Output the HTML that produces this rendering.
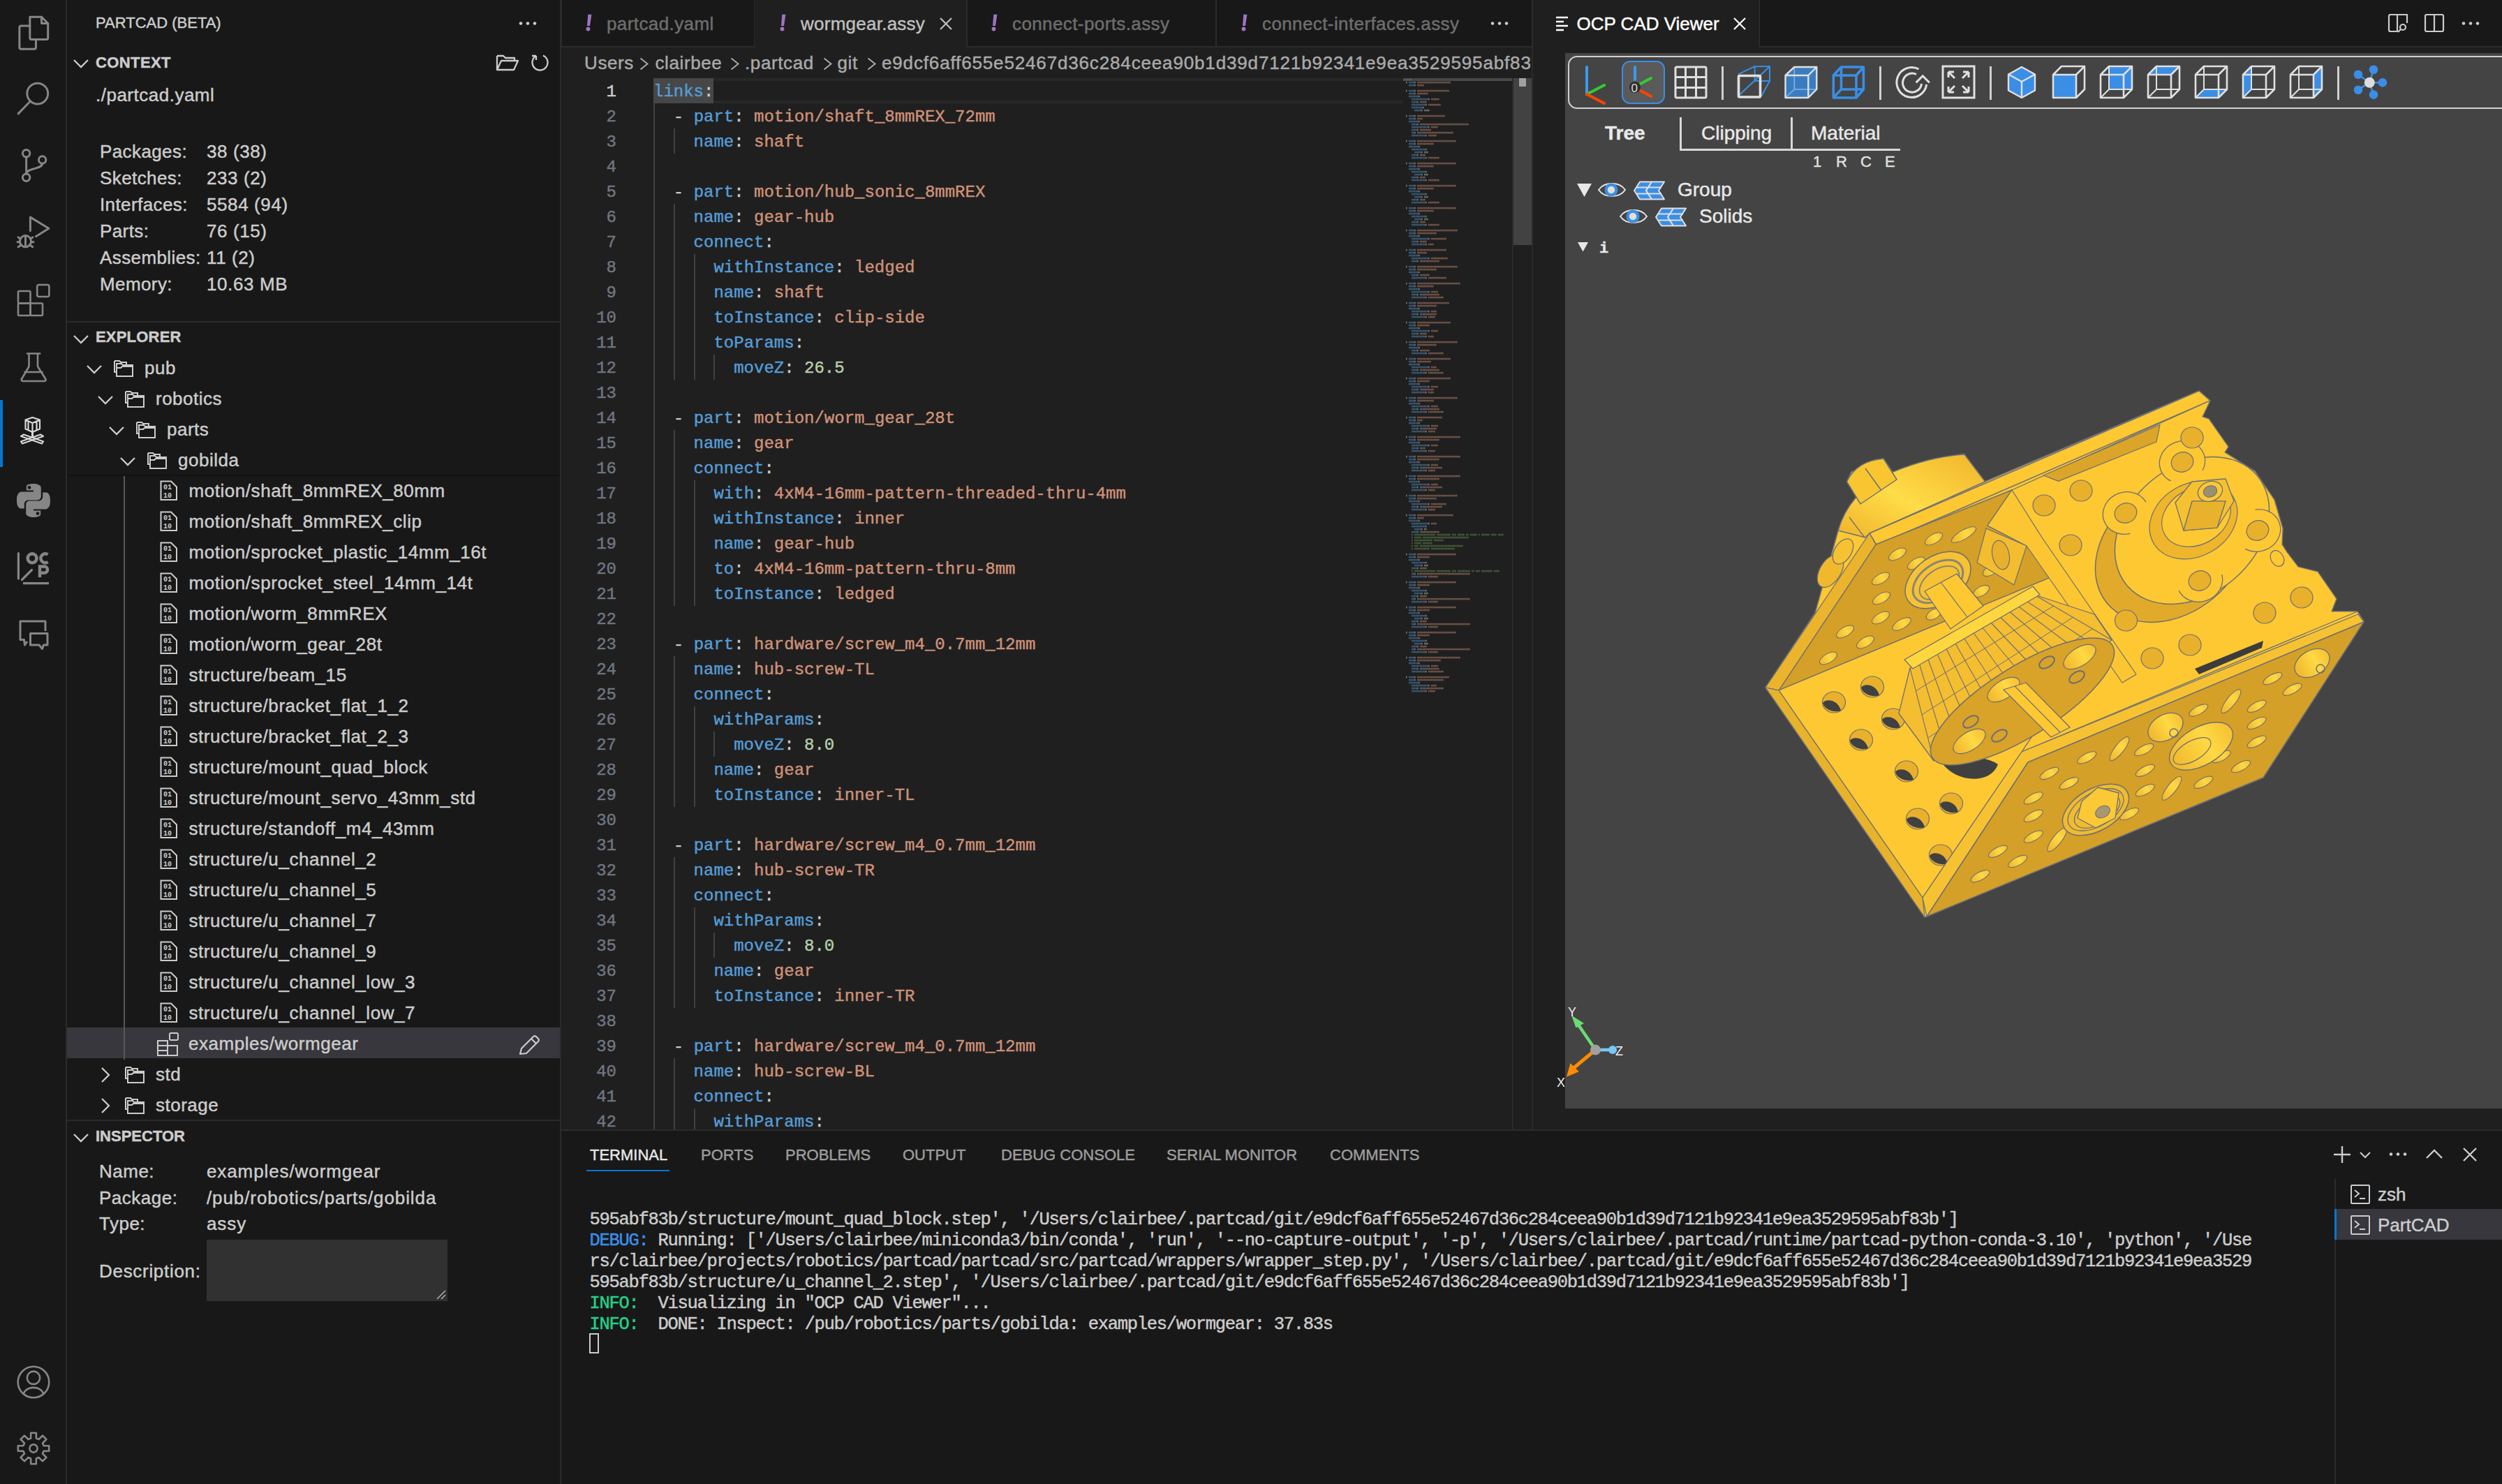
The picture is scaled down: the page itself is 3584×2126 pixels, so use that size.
<!DOCTYPE html>
<html><head><meta charset="utf-8"><style>
*{margin:0;padding:0;box-sizing:border-box}
html,body{width:3584px;height:2126px;overflow:hidden;background:#181818}
body{position:relative;font-family:"Liberation Sans",sans-serif;color:#cccccc}
.a{position:absolute;white-space:pre;line-height:0;-webkit-text-stroke-width:0.45px}
.r{position:absolute}
svg{position:absolute;overflow:visible}
</style></head><body>
<div class="r" style="left:0px;top:0px;width:94px;height:2126px;background:#181818;"></div>
<div class="r" style="left:94px;top:0px;width:2px;height:2126px;background:#2b2b2b;"></div>
<svg style="left:24px;top:21px;" width="48" height="48" viewBox="0 0 48 48"><g transform="translate(24 24) scale(1.15) translate(-24 -24)" fill="none" stroke="#868686" stroke-width="2.6" stroke-linejoin="round" stroke-linecap="round"><path d="M19.5 6 H34 L42 14 V32 a2 2 0 0 1 -2 2 H21.5 a2 2 0 0 1 -2 -2 Z"/><path d="M34 6 V14 H42"/><path d="M19.5 17 H8.5 a2 2 0 0 0 -2 2 V44 a2 2 0 0 0 2 2 H25 a2 2 0 0 0 2 -2 V34"/></g></svg>
<svg style="left:24px;top:117px;" width="48" height="48" viewBox="0 0 48 48"><g transform="translate(24 24) scale(1.15) translate(-24 -24)" fill="none" stroke="#868686" stroke-width="2.6" stroke-linejoin="round" stroke-linecap="round"><circle cx="29" cy="18" r="13"/><path d="M20 27.5 L5 43"/></g></svg>
<svg style="left:24px;top:213px;" width="48" height="48" viewBox="0 0 48 48"><g transform="translate(24 24) scale(1.15) translate(-24 -24)" fill="none" stroke="#868686" stroke-width="2.6" stroke-linejoin="round" stroke-linecap="round"><circle cx="15" cy="9" r="4.5"/><circle cx="15" cy="39" r="4.5"/><circle cx="35" cy="17" r="4.5"/><path d="M15 13.5 V34.5"/><path d="M35 21.5 C35 29 15 27 15 34.5"/></g></svg>
<svg style="left:24px;top:309px;" width="48" height="48" viewBox="0 0 48 48"><g transform="translate(24 24) scale(1.15) translate(-24 -24)" fill="none" stroke="#868686" stroke-width="2.6" stroke-linejoin="round" stroke-linecap="round"><path d="M20 5 V22 M20 5 L43 19 L27 29"/><circle cx="14" cy="35" r="7"/><path d="M14 28 V42 M5 30 L8 32 M23 30 L20 32 M4 36 H7 M21 36 H24 M5 42 L8 40 M23 42 L20 40"/></g></svg>
<svg style="left:24px;top:405px;" width="48" height="48" viewBox="0 0 48 48"><g transform="translate(24 24) scale(1) translate(-24 -24)" fill="none" stroke="#868686" stroke-width="2.6" stroke-linejoin="round" stroke-linecap="round"><rect x="2" y="12" width="17.5" height="17.5" rx="1.5"/><rect x="2" y="29.5" width="17.5" height="17.5" rx="1.5"/><rect x="19.5" y="29.5" width="17.5" height="17.5" rx="1.5"/><rect x="29.2" y="3" width="17.2" height="17" rx="2.5"/></g></svg>
<svg style="left:24px;top:501px;" width="48" height="48" viewBox="0 0 48 48"><g transform="translate(24 24) scale(1) translate(-24 -24)" fill="none" stroke="#868686" stroke-width="2.6" stroke-linejoin="round" stroke-linecap="round"><path d="M15 5.5 H33.3 M17.5 5.5 V24 L7 42 a2 2 0 0 0 1.8 3 H39.5 a2 2 0 0 0 1.8 -3 L30 24 V5.5 M11.5 32 H36.5"/></g></svg>
<div class="r" style="left:0px;top:573px;width:4px;height:96px;background:#0078d4;"></div>
<svg style="left:24px;top:597px;" width="48" height="48" viewBox="0 0 48 48"><g fill="none" stroke="#d7d7d7" stroke-width="2.2" stroke-linejoin="round"><path d="M12.5 4.5 L22.5 1 L33 4.5 V17.5 L22.5 22 L12.5 17.5 Z M12.5 4.5 L22.5 9 L33 4.5 M22.5 9 V22 M16.5 7 V19 M28.5 7 V19"/><path d="M6 28 L10 25.5 L38 35.5 L36 38.5 Z M38 28 L34 25.5 L6 35.5 L8 38.5 Z"/></g><path d="M21 21 H24 V31 H21 Z" fill="#d7d7d7"/></svg>
<svg style="left:24px;top:693px;" width="48" height="48" viewBox="0 0 48 48"><g transform="translate(24 24) scale(1.2) translate(-24 -24)"><g fill="#868686"><path d="M23.5 4 C15 4 15.5 7.5 15.5 7.5 V12 H24 V13.5 H10 C10 13.5 4 13 4 23.5 C4 34 9 33.5 9 33.5 H13 V28.5 C13 28.5 12.8 23.5 18 23.5 H28.5 C28.5 23.5 33 23.5 33 19 V9 C33 9 33.7 4 23.5 4 Z"/><path d="M24.5 44 C33 44 32.5 40.5 32.5 40.5 V36 H24 V34.5 H38 C38 34.5 44 35 44 24.5 C44 14 39 14.5 39 14.5 H35 V19.5 C35 19.5 35.2 24.5 30 24.5 H19.5 C19.5 24.5 15 24.5 15 29 V39 C15 39 14.3 44 24.5 44 Z"/></g><circle cx="19" cy="8.5" r="2" fill="#181818"/><circle cx="29" cy="39.5" r="2" fill="#181818"/></g></svg>
<svg style="left:24px;top:789px;" width="48" height="48" viewBox="0 0 48 48"><g fill="none" stroke="#868686" stroke-width="3.2" stroke-linecap="round"><path d="M2.4 3.5 V40 M7.5 41.5 L21.5 27.5"/><path d="M9 46.6 H46" stroke-linecap="butt"/></g><g fill="none" stroke="#868686" stroke-width="4.6"><circle cx="22.1" cy="10.8" r="6.4"/><path d="M44.5 5.5 A6.4 6.4 0 1 0 44.5 16"/></g><path d="M33 38 V22.5 H39.5 A4.6 4.6 0 0 1 39.5 31.7 H33" fill="none" stroke="#868686" stroke-width="4.4"/></svg>
<svg style="left:24px;top:885px;" width="48" height="48" viewBox="0 0 48 48"><g fill="none" stroke="#868686" stroke-width="3" stroke-linejoin="round"><path d="M41 19 V5 H5 V31.5 H10.5 L11.5 39 L15 34"/><path d="M19.5 22.5 H44 V39 H38.5 L36.5 44.5 L32 39 H19.5 Z"/></g></svg>
<svg style="left:24px;top:1956px;" width="48" height="48" viewBox="0 0 48 48"><g transform="translate(24 24) scale(1) translate(-24 -24)" fill="none" stroke="#868686" stroke-width="2.6" stroke-linejoin="round" stroke-linecap="round"><circle cx="24" cy="24" r="22.3"/><circle cx="24" cy="17.8" r="9.2"/><path d="M10 40.5 C13 29 35 29 38 40.5"/></g></svg>
<svg style="left:24px;top:2051px;" width="48" height="48" viewBox="0 0 48 48"><g transform="translate(24 24) scale(1) translate(-24 -24)" fill="none" stroke="#868686" stroke-width="2.6" stroke-linejoin="round" stroke-linecap="round"><path d="M20.1 9.5 L20.2 1.8 L27.8 1.8 L27.9 9.5 L31.5 11.0 L37.0 5.6 L42.4 11.0 L37.0 16.5 L38.5 20.1 L46.2 20.2 L46.2 27.8 L38.5 27.9 L37.0 31.5 L42.4 37.0 L37.0 42.4 L31.5 37.0 L27.9 38.5 L27.8 46.2 L20.2 46.2 L20.1 38.5 L16.5 37.0 L11.0 42.4 L5.6 37.0 L11.0 31.5 L9.5 27.9 L1.8 27.8 L1.8 20.2 L9.5 20.1 L11.0 16.5 L5.6 11.0 L11.0 5.6 L16.5 11.0 Z"/><circle cx="24" cy="24" r="5.6"/></g></svg>
<div class="r" style="left:96px;top:0px;width:706px;height:2126px;background:#181818;"></div>
<div class="r" style="left:802px;top:0px;width:2px;height:2126px;background:#2b2b2b;"></div>
<div class="a" style="left:137px;top:33.3px;font-family:'Liberation Sans';font-size:22px;color:#cccccc;font-weight:400;letter-spacing:0px;">PARTCAD (BETA)</div>
<svg style="left:740px;top:30px;" width="34" height="8" viewBox="0 0 34 8"><g fill="#cccccc"><circle cx="6" cy="3.5" r="2.3"/><circle cx="16" cy="3.5" r="2.3"/><circle cx="26" cy="3.5" r="2.3"/></g></svg>
<svg style="left:105px;top:85px;" width="22" height="12" viewBox="0 0 22 12"><path d="M1 1 L11 11 L21 1" fill="none" stroke="#cccccc" stroke-width="2.3"/></svg>
<div class="a" style="left:137px;top:90.3px;font-family:'Liberation Sans';font-size:22px;color:#cccccc;font-weight:700;letter-spacing:0.4px;">CONTEXT</div>
<svg style="left:710px;top:76px;" width="34" height="28" viewBox="0 0 34 28"><path d="M2 4 H11 L14 7 H27 V11 M2 4 V24 H26 L32 11 H8 L2 24" fill="none" stroke="#cccccc" stroke-width="2.3" stroke-linejoin="round"/></svg>
<svg style="left:760px;top:76px;" width="30" height="28" viewBox="0 0 30 28"><path d="M8 4 A11 11 0 1 0 18 3.5" fill="none" stroke="#cccccc" stroke-width="2.3"/><path d="M8 4 H2 M8 4 V10" fill="none" stroke="#cccccc" stroke-width="2.3"/></svg>
<div class="a" style="left:137px;top:135.9px;font-family:'Liberation Sans';font-size:26px;color:#cccccc;font-weight:400;letter-spacing:0.5px;">./partcad.yaml</div>
<div class="a" style="left:143px;top:217.4px;font-family:'Liberation Sans';font-size:26px;color:#cccccc;font-weight:400;letter-spacing:0.4px;">Packages:</div>
<div class="a" style="left:296px;top:217.4px;font-family:'Liberation Sans';font-size:26px;color:#cccccc;font-weight:400;letter-spacing:0.6px;">38 (38)</div>
<div class="a" style="left:143px;top:255.4px;font-family:'Liberation Sans';font-size:26px;color:#cccccc;font-weight:400;letter-spacing:0.4px;">Sketches:</div>
<div class="a" style="left:296px;top:255.4px;font-family:'Liberation Sans';font-size:26px;color:#cccccc;font-weight:400;letter-spacing:0.6px;">233 (2)</div>
<div class="a" style="left:143px;top:293.4px;font-family:'Liberation Sans';font-size:26px;color:#cccccc;font-weight:400;letter-spacing:0.4px;">Interfaces:</div>
<div class="a" style="left:296px;top:293.4px;font-family:'Liberation Sans';font-size:26px;color:#cccccc;font-weight:400;letter-spacing:0.6px;">5584 (94)</div>
<div class="a" style="left:143px;top:331.4px;font-family:'Liberation Sans';font-size:26px;color:#cccccc;font-weight:400;letter-spacing:0.4px;">Parts:</div>
<div class="a" style="left:296px;top:331.4px;font-family:'Liberation Sans';font-size:26px;color:#cccccc;font-weight:400;letter-spacing:0.6px;">76 (15)</div>
<div class="a" style="left:143px;top:369.4px;font-family:'Liberation Sans';font-size:26px;color:#cccccc;font-weight:400;letter-spacing:0.4px;">Assemblies:</div>
<div class="a" style="left:296px;top:369.4px;font-family:'Liberation Sans';font-size:26px;color:#cccccc;font-weight:400;letter-spacing:0.6px;">11 (2)</div>
<div class="a" style="left:143px;top:407.4px;font-family:'Liberation Sans';font-size:26px;color:#cccccc;font-weight:400;letter-spacing:0.4px;">Memory:</div>
<div class="a" style="left:296px;top:407.4px;font-family:'Liberation Sans';font-size:26px;color:#cccccc;font-weight:400;letter-spacing:0.6px;">10.63 MB</div>
<div class="r" style="left:96px;top:460px;width:706px;height:2px;background:#2b2b2b;"></div>
<svg style="left:105px;top:480px;" width="22" height="12" viewBox="0 0 22 12"><path d="M1 1 L11 11 L21 1" fill="none" stroke="#cccccc" stroke-width="2.3"/></svg>
<div class="a" style="left:137px;top:483.3px;font-family:'Liberation Sans';font-size:22px;color:#cccccc;font-weight:700;letter-spacing:0.2px;">EXPLORER</div>
<div class="r" style="left:96px;top:1472px;width:706px;height:44px;background:#37373d;"></div>
<svg style="left:124px;top:523px;" width="22" height="12" viewBox="0 0 22 12"><path d="M1 1 L11 11 L21 1" fill="none" stroke="#cccccc" stroke-width="2.3"/></svg>
<svg style="left:163px;top:514px;" width="30" height="30" viewBox="0 0 30 30"><g fill="none" stroke="#cccccc" stroke-width="2"><path d="M1 3 H8 L10 5 H18 V8"/><path d="M1 3 V19 H4"/><path d="M4 7 H11 L13 9 H27 V25 H4 Z"/><path d="M4 13 H10 L12 11 H27"/></g></svg>
<div class="a" style="left:207px;top:526.9px;font-family:'Liberation Sans';font-size:26px;color:#cccccc;font-weight:400;letter-spacing:0.5px;">pub</div>
<svg style="left:140px;top:567px;" width="22" height="12" viewBox="0 0 22 12"><path d="M1 1 L11 11 L21 1" fill="none" stroke="#cccccc" stroke-width="2.3"/></svg>
<svg style="left:179px;top:558px;" width="30" height="30" viewBox="0 0 30 30"><g fill="none" stroke="#cccccc" stroke-width="2"><path d="M1 3 H8 L10 5 H18 V8"/><path d="M1 3 V19 H4"/><path d="M4 7 H11 L13 9 H27 V25 H4 Z"/><path d="M4 13 H10 L12 11 H27"/></g></svg>
<div class="a" style="left:223px;top:570.9px;font-family:'Liberation Sans';font-size:26px;color:#cccccc;font-weight:400;letter-spacing:0.5px;">robotics</div>
<svg style="left:156px;top:611px;" width="22" height="12" viewBox="0 0 22 12"><path d="M1 1 L11 11 L21 1" fill="none" stroke="#cccccc" stroke-width="2.3"/></svg>
<svg style="left:195px;top:602px;" width="30" height="30" viewBox="0 0 30 30"><g fill="none" stroke="#cccccc" stroke-width="2"><path d="M1 3 H8 L10 5 H18 V8"/><path d="M1 3 V19 H4"/><path d="M4 7 H11 L13 9 H27 V25 H4 Z"/><path d="M4 13 H10 L12 11 H27"/></g></svg>
<div class="a" style="left:239px;top:614.9px;font-family:'Liberation Sans';font-size:26px;color:#cccccc;font-weight:400;letter-spacing:0.5px;">parts</div>
<svg style="left:172px;top:655px;" width="22" height="12" viewBox="0 0 22 12"><path d="M1 1 L11 11 L21 1" fill="none" stroke="#cccccc" stroke-width="2.3"/></svg>
<svg style="left:211px;top:646px;" width="30" height="30" viewBox="0 0 30 30"><g fill="none" stroke="#cccccc" stroke-width="2"><path d="M1 3 H8 L10 5 H18 V8"/><path d="M1 3 V19 H4"/><path d="M4 7 H11 L13 9 H27 V25 H4 Z"/><path d="M4 13 H10 L12 11 H27"/></g></svg>
<div class="a" style="left:255px;top:658.9px;font-family:'Liberation Sans';font-size:26px;color:#cccccc;font-weight:400;letter-spacing:0.5px;">gobilda</div>
<div class="r" style="left:96px;top:680px;width:706px;height:3px;background:linear-gradient(#0e0e0e,#181818);"></div>
<div class="r" style="left:177px;top:682px;width:2px;height:836px;background:#585858;"></div>
<svg style="left:229px;top:688px;" width="26" height="30" viewBox="0 0 26 30"><path d="M1.5 1.5 H16 L24 9.5 V28 H1.5 Z" fill="none" stroke="#cccccc" stroke-width="2"/><text x="5" y="13" font-family="Liberation Mono" font-size="10" font-weight="700" fill="#cccccc">01</text><text x="5" y="24.5" font-family="Liberation Mono" font-size="10" font-weight="700" fill="#cccccc">10</text></svg>
<div class="a" style="left:270.5px;top:702.9px;font-family:'Liberation Sans';font-size:26px;color:#cccccc;font-weight:400;letter-spacing:0.55px;">motion/shaft_8mmREX_80mm</div>
<svg style="left:229px;top:732px;" width="26" height="30" viewBox="0 0 26 30"><path d="M1.5 1.5 H16 L24 9.5 V28 H1.5 Z" fill="none" stroke="#cccccc" stroke-width="2"/><text x="5" y="13" font-family="Liberation Mono" font-size="10" font-weight="700" fill="#cccccc">01</text><text x="5" y="24.5" font-family="Liberation Mono" font-size="10" font-weight="700" fill="#cccccc">10</text></svg>
<div class="a" style="left:270.5px;top:746.9px;font-family:'Liberation Sans';font-size:26px;color:#cccccc;font-weight:400;letter-spacing:0.55px;">motion/shaft_8mmREX_clip</div>
<svg style="left:229px;top:776px;" width="26" height="30" viewBox="0 0 26 30"><path d="M1.5 1.5 H16 L24 9.5 V28 H1.5 Z" fill="none" stroke="#cccccc" stroke-width="2"/><text x="5" y="13" font-family="Liberation Mono" font-size="10" font-weight="700" fill="#cccccc">01</text><text x="5" y="24.5" font-family="Liberation Mono" font-size="10" font-weight="700" fill="#cccccc">10</text></svg>
<div class="a" style="left:270.5px;top:790.9px;font-family:'Liberation Sans';font-size:26px;color:#cccccc;font-weight:400;letter-spacing:0.55px;">motion/sprocket_plastic_14mm_16t</div>
<svg style="left:229px;top:820px;" width="26" height="30" viewBox="0 0 26 30"><path d="M1.5 1.5 H16 L24 9.5 V28 H1.5 Z" fill="none" stroke="#cccccc" stroke-width="2"/><text x="5" y="13" font-family="Liberation Mono" font-size="10" font-weight="700" fill="#cccccc">01</text><text x="5" y="24.5" font-family="Liberation Mono" font-size="10" font-weight="700" fill="#cccccc">10</text></svg>
<div class="a" style="left:270.5px;top:834.9px;font-family:'Liberation Sans';font-size:26px;color:#cccccc;font-weight:400;letter-spacing:0.55px;">motion/sprocket_steel_14mm_14t</div>
<svg style="left:229px;top:864px;" width="26" height="30" viewBox="0 0 26 30"><path d="M1.5 1.5 H16 L24 9.5 V28 H1.5 Z" fill="none" stroke="#cccccc" stroke-width="2"/><text x="5" y="13" font-family="Liberation Mono" font-size="10" font-weight="700" fill="#cccccc">01</text><text x="5" y="24.5" font-family="Liberation Mono" font-size="10" font-weight="700" fill="#cccccc">10</text></svg>
<div class="a" style="left:270.5px;top:878.9px;font-family:'Liberation Sans';font-size:26px;color:#cccccc;font-weight:400;letter-spacing:0.55px;">motion/worm_8mmREX</div>
<svg style="left:229px;top:908px;" width="26" height="30" viewBox="0 0 26 30"><path d="M1.5 1.5 H16 L24 9.5 V28 H1.5 Z" fill="none" stroke="#cccccc" stroke-width="2"/><text x="5" y="13" font-family="Liberation Mono" font-size="10" font-weight="700" fill="#cccccc">01</text><text x="5" y="24.5" font-family="Liberation Mono" font-size="10" font-weight="700" fill="#cccccc">10</text></svg>
<div class="a" style="left:270.5px;top:922.9px;font-family:'Liberation Sans';font-size:26px;color:#cccccc;font-weight:400;letter-spacing:0.55px;">motion/worm_gear_28t</div>
<svg style="left:229px;top:952px;" width="26" height="30" viewBox="0 0 26 30"><path d="M1.5 1.5 H16 L24 9.5 V28 H1.5 Z" fill="none" stroke="#cccccc" stroke-width="2"/><text x="5" y="13" font-family="Liberation Mono" font-size="10" font-weight="700" fill="#cccccc">01</text><text x="5" y="24.5" font-family="Liberation Mono" font-size="10" font-weight="700" fill="#cccccc">10</text></svg>
<div class="a" style="left:270.5px;top:966.9px;font-family:'Liberation Sans';font-size:26px;color:#cccccc;font-weight:400;letter-spacing:0.55px;">structure/beam_15</div>
<svg style="left:229px;top:996px;" width="26" height="30" viewBox="0 0 26 30"><path d="M1.5 1.5 H16 L24 9.5 V28 H1.5 Z" fill="none" stroke="#cccccc" stroke-width="2"/><text x="5" y="13" font-family="Liberation Mono" font-size="10" font-weight="700" fill="#cccccc">01</text><text x="5" y="24.5" font-family="Liberation Mono" font-size="10" font-weight="700" fill="#cccccc">10</text></svg>
<div class="a" style="left:270.5px;top:1010.9px;font-family:'Liberation Sans';font-size:26px;color:#cccccc;font-weight:400;letter-spacing:0.55px;">structure/bracket_flat_1_2</div>
<svg style="left:229px;top:1040px;" width="26" height="30" viewBox="0 0 26 30"><path d="M1.5 1.5 H16 L24 9.5 V28 H1.5 Z" fill="none" stroke="#cccccc" stroke-width="2"/><text x="5" y="13" font-family="Liberation Mono" font-size="10" font-weight="700" fill="#cccccc">01</text><text x="5" y="24.5" font-family="Liberation Mono" font-size="10" font-weight="700" fill="#cccccc">10</text></svg>
<div class="a" style="left:270.5px;top:1054.9px;font-family:'Liberation Sans';font-size:26px;color:#cccccc;font-weight:400;letter-spacing:0.55px;">structure/bracket_flat_2_3</div>
<svg style="left:229px;top:1084px;" width="26" height="30" viewBox="0 0 26 30"><path d="M1.5 1.5 H16 L24 9.5 V28 H1.5 Z" fill="none" stroke="#cccccc" stroke-width="2"/><text x="5" y="13" font-family="Liberation Mono" font-size="10" font-weight="700" fill="#cccccc">01</text><text x="5" y="24.5" font-family="Liberation Mono" font-size="10" font-weight="700" fill="#cccccc">10</text></svg>
<div class="a" style="left:270.5px;top:1098.9px;font-family:'Liberation Sans';font-size:26px;color:#cccccc;font-weight:400;letter-spacing:0.55px;">structure/mount_quad_block</div>
<svg style="left:229px;top:1128px;" width="26" height="30" viewBox="0 0 26 30"><path d="M1.5 1.5 H16 L24 9.5 V28 H1.5 Z" fill="none" stroke="#cccccc" stroke-width="2"/><text x="5" y="13" font-family="Liberation Mono" font-size="10" font-weight="700" fill="#cccccc">01</text><text x="5" y="24.5" font-family="Liberation Mono" font-size="10" font-weight="700" fill="#cccccc">10</text></svg>
<div class="a" style="left:270.5px;top:1142.9px;font-family:'Liberation Sans';font-size:26px;color:#cccccc;font-weight:400;letter-spacing:0.55px;">structure/mount_servo_43mm_std</div>
<svg style="left:229px;top:1172px;" width="26" height="30" viewBox="0 0 26 30"><path d="M1.5 1.5 H16 L24 9.5 V28 H1.5 Z" fill="none" stroke="#cccccc" stroke-width="2"/><text x="5" y="13" font-family="Liberation Mono" font-size="10" font-weight="700" fill="#cccccc">01</text><text x="5" y="24.5" font-family="Liberation Mono" font-size="10" font-weight="700" fill="#cccccc">10</text></svg>
<div class="a" style="left:270.5px;top:1186.9px;font-family:'Liberation Sans';font-size:26px;color:#cccccc;font-weight:400;letter-spacing:0.55px;">structure/standoff_m4_43mm</div>
<svg style="left:229px;top:1216px;" width="26" height="30" viewBox="0 0 26 30"><path d="M1.5 1.5 H16 L24 9.5 V28 H1.5 Z" fill="none" stroke="#cccccc" stroke-width="2"/><text x="5" y="13" font-family="Liberation Mono" font-size="10" font-weight="700" fill="#cccccc">01</text><text x="5" y="24.5" font-family="Liberation Mono" font-size="10" font-weight="700" fill="#cccccc">10</text></svg>
<div class="a" style="left:270.5px;top:1230.9px;font-family:'Liberation Sans';font-size:26px;color:#cccccc;font-weight:400;letter-spacing:0.55px;">structure/u_channel_2</div>
<svg style="left:229px;top:1260px;" width="26" height="30" viewBox="0 0 26 30"><path d="M1.5 1.5 H16 L24 9.5 V28 H1.5 Z" fill="none" stroke="#cccccc" stroke-width="2"/><text x="5" y="13" font-family="Liberation Mono" font-size="10" font-weight="700" fill="#cccccc">01</text><text x="5" y="24.5" font-family="Liberation Mono" font-size="10" font-weight="700" fill="#cccccc">10</text></svg>
<div class="a" style="left:270.5px;top:1274.9px;font-family:'Liberation Sans';font-size:26px;color:#cccccc;font-weight:400;letter-spacing:0.55px;">structure/u_channel_5</div>
<svg style="left:229px;top:1304px;" width="26" height="30" viewBox="0 0 26 30"><path d="M1.5 1.5 H16 L24 9.5 V28 H1.5 Z" fill="none" stroke="#cccccc" stroke-width="2"/><text x="5" y="13" font-family="Liberation Mono" font-size="10" font-weight="700" fill="#cccccc">01</text><text x="5" y="24.5" font-family="Liberation Mono" font-size="10" font-weight="700" fill="#cccccc">10</text></svg>
<div class="a" style="left:270.5px;top:1318.9px;font-family:'Liberation Sans';font-size:26px;color:#cccccc;font-weight:400;letter-spacing:0.55px;">structure/u_channel_7</div>
<svg style="left:229px;top:1348px;" width="26" height="30" viewBox="0 0 26 30"><path d="M1.5 1.5 H16 L24 9.5 V28 H1.5 Z" fill="none" stroke="#cccccc" stroke-width="2"/><text x="5" y="13" font-family="Liberation Mono" font-size="10" font-weight="700" fill="#cccccc">01</text><text x="5" y="24.5" font-family="Liberation Mono" font-size="10" font-weight="700" fill="#cccccc">10</text></svg>
<div class="a" style="left:270.5px;top:1362.9px;font-family:'Liberation Sans';font-size:26px;color:#cccccc;font-weight:400;letter-spacing:0.55px;">structure/u_channel_9</div>
<svg style="left:229px;top:1392px;" width="26" height="30" viewBox="0 0 26 30"><path d="M1.5 1.5 H16 L24 9.5 V28 H1.5 Z" fill="none" stroke="#cccccc" stroke-width="2"/><text x="5" y="13" font-family="Liberation Mono" font-size="10" font-weight="700" fill="#cccccc">01</text><text x="5" y="24.5" font-family="Liberation Mono" font-size="10" font-weight="700" fill="#cccccc">10</text></svg>
<div class="a" style="left:270.5px;top:1406.9px;font-family:'Liberation Sans';font-size:26px;color:#cccccc;font-weight:400;letter-spacing:0.55px;">structure/u_channel_low_3</div>
<svg style="left:229px;top:1436px;" width="26" height="30" viewBox="0 0 26 30"><path d="M1.5 1.5 H16 L24 9.5 V28 H1.5 Z" fill="none" stroke="#cccccc" stroke-width="2"/><text x="5" y="13" font-family="Liberation Mono" font-size="10" font-weight="700" fill="#cccccc">01</text><text x="5" y="24.5" font-family="Liberation Mono" font-size="10" font-weight="700" fill="#cccccc">10</text></svg>
<div class="a" style="left:270.5px;top:1450.9px;font-family:'Liberation Sans';font-size:26px;color:#cccccc;font-weight:400;letter-spacing:0.55px;">structure/u_channel_low_7</div>
<svg style="left:225px;top:1479px;" width="34" height="34" viewBox="0 0 34 34"><g fill="none" stroke="#cccccc" stroke-width="2"><rect x="1" y="12" width="14" height="14"/><rect x="1" y="26" width="14" height="0"/><path d="M1 19 H29 V33 H1 Z M15 12 V33"/><rect x="18" y="1" width="12" height="10" rx="2"/></g></svg>
<div class="a" style="left:270px;top:1494.9px;font-family:'Liberation Sans';font-size:26px;color:#cccccc;font-weight:400;letter-spacing:0.55px;">examples/wormgear</div>
<svg style="left:742px;top:1482px;" width="34" height="32" viewBox="0 0 34 32"><path d="M3 28 L5 20 L22 3 a3 3 0 0 1 4 0 L29 6 a3 3 0 0 1 0 4 L12 27 Z M19 6 L26 13" fill="none" stroke="#cccccc" stroke-width="2.2" stroke-linejoin="round"/></svg>
<svg style="left:145px;top:1529px;" width="12" height="22" viewBox="0 0 12 22"><path d="M1 1 L11 11 L1 21" fill="none" stroke="#cccccc" stroke-width="2.3"/></svg>
<svg style="left:179px;top:1526px;" width="30" height="30" viewBox="0 0 30 30"><g fill="none" stroke="#cccccc" stroke-width="2"><path d="M1 3 H8 L10 5 H18 V8"/><path d="M1 3 V19 H4"/><path d="M4 7 H11 L13 9 H27 V25 H4 Z"/><path d="M4 13 H10 L12 11 H27"/></g></svg>
<div class="a" style="left:223px;top:1538.9px;font-family:'Liberation Sans';font-size:26px;color:#cccccc;font-weight:400;letter-spacing:0.5px;">std</div>
<svg style="left:145px;top:1573px;" width="12" height="22" viewBox="0 0 12 22"><path d="M1 1 L11 11 L1 21" fill="none" stroke="#cccccc" stroke-width="2.3"/></svg>
<svg style="left:179px;top:1570px;" width="30" height="30" viewBox="0 0 30 30"><g fill="none" stroke="#cccccc" stroke-width="2"><path d="M1 3 H8 L10 5 H18 V8"/><path d="M1 3 V19 H4"/><path d="M4 7 H11 L13 9 H27 V25 H4 Z"/><path d="M4 13 H10 L12 11 H27"/></g></svg>
<div class="a" style="left:223px;top:1582.9px;font-family:'Liberation Sans';font-size:26px;color:#cccccc;font-weight:400;letter-spacing:0.5px;">storage</div>
<div class="r" style="left:96px;top:1604px;width:706px;height:2px;background:#2b2b2b;"></div>
<svg style="left:105px;top:1624px;" width="22" height="12" viewBox="0 0 22 12"><path d="M1 1 L11 11 L21 1" fill="none" stroke="#cccccc" stroke-width="2.3"/></svg>
<div class="a" style="left:137px;top:1628.3px;font-family:'Liberation Sans';font-size:22px;color:#cccccc;font-weight:700;letter-spacing:0px;">INSPECTOR</div>
<div class="a" style="left:142px;top:1677.9px;font-family:'Liberation Sans';font-size:26px;color:#cccccc;font-weight:400;letter-spacing:0.5px;">Name:</div>
<div class="a" style="left:296px;top:1677.9px;font-family:'Liberation Sans';font-size:26px;color:#cccccc;font-weight:400;letter-spacing:0.9px;">examples/wormgear</div>
<div class="a" style="left:142px;top:1715.9px;font-family:'Liberation Sans';font-size:26px;color:#cccccc;font-weight:400;letter-spacing:0.5px;">Package:</div>
<div class="a" style="left:296px;top:1715.9px;font-family:'Liberation Sans';font-size:26px;color:#cccccc;font-weight:400;letter-spacing:0.9px;">/pub/robotics/parts/gobilda</div>
<div class="a" style="left:142px;top:1752.9px;font-family:'Liberation Sans';font-size:26px;color:#cccccc;font-weight:400;letter-spacing:0.5px;">Type:</div>
<div class="a" style="left:296px;top:1752.9px;font-family:'Liberation Sans';font-size:26px;color:#cccccc;font-weight:400;letter-spacing:0.9px;">assy</div>
<div class="a" style="left:142px;top:1820.9px;font-family:'Liberation Sans';font-size:26px;color:#cccccc;font-weight:400;letter-spacing:0.7px;">Description:</div>
<div class="r" style="left:296px;top:1776px;width:345px;height:88px;background:#313131;"></div>
<svg style="left:624px;top:1847px;" width="16" height="16" viewBox="0 0 16 16"><path d="M14 2 L2 14 M14 8 L8 14" stroke="#aaaaaa" stroke-width="1.6"/></svg>
<div class="r" style="left:804px;top:0px;width:1390px;height:1618px;background:#1f1f1f;"></div>
<div class="r" style="left:804px;top:0px;width:1390px;height:66px;background:#181818;"></div>
<div class="r" style="left:804px;top:66px;width:1390px;height:2px;background:#2b2b2b;"></div>
<div class="r" style="left:1080px;top:0px;width:2px;height:66px;background:#2b2b2b;"></div>
<svg style="left:840px;top:19px;" width="12" height="27" viewBox="0 0 12 27"><path d="M2.3 1.8 H7.4 L5 18 H1 Z" fill="#a074c4"/><circle cx="2.5" cy="22.5" r="2.9" fill="#a074c4"/></svg>
<div class="a" style="left:869px;top:34.4px;font-family:'Liberation Sans';font-size:26px;color:#6e6e6e;font-weight:400;letter-spacing:0.4px;">partcad.yaml</div>
<div class="r" style="left:1081px;top:0px;width:304px;height:68px;background:#1f1f1f;"></div>
<div class="r" style="left:1384px;top:0px;width:2px;height:66px;background:#2b2b2b;"></div>
<svg style="left:1118px;top:19px;" width="12" height="27" viewBox="0 0 12 27"><path d="M2.3 1.8 H7.4 L5 18 H1 Z" fill="#a074c4"/><circle cx="2.5" cy="22.5" r="2.9" fill="#a074c4"/></svg>
<div class="a" style="left:1147px;top:34.4px;font-family:'Liberation Sans';font-size:26px;color:#bfbfbf;font-weight:400;letter-spacing:0.25px;">wormgear.assy</div>
<div class="r" style="left:1741px;top:0px;width:2px;height:66px;background:#2b2b2b;"></div>
<svg style="left:1421px;top:19px;" width="12" height="27" viewBox="0 0 12 27"><path d="M2.3 1.8 H7.4 L5 18 H1 Z" fill="#a074c4"/><circle cx="2.5" cy="22.5" r="2.9" fill="#a074c4"/></svg>
<div class="a" style="left:1450px;top:34.4px;font-family:'Liberation Sans';font-size:26px;color:#6e6e6e;font-weight:400;letter-spacing:0.4px;">connect-ports.assy</div>
<svg style="left:1779px;top:19px;" width="12" height="27" viewBox="0 0 12 27"><path d="M2.3 1.8 H7.4 L5 18 H1 Z" fill="#a074c4"/><circle cx="2.5" cy="22.5" r="2.9" fill="#a074c4"/></svg>
<div class="a" style="left:1808px;top:34.4px;font-family:'Liberation Sans';font-size:26px;color:#6e6e6e;font-weight:400;letter-spacing:0.4px;">connect-interfaces.assy</div>
<div class="r" style="left:803px;top:0px;width:2px;height:66px;background:#2b2b2b;"></div>
<svg style="left:1345px;top:24px;" width="20" height="20" viewBox="0 0 20 20"><path d="M2 2 L18 18 M18 2 L2 18" stroke="#bfbfbf" stroke-width="2.2"/></svg>
<svg style="left:2132px;top:30px;" width="34" height="8" viewBox="0 0 34 8"><g fill="#cccccc"><circle cx="6" cy="3.5" r="2.3"/><circle cx="16" cy="3.5" r="2.3"/><circle cx="26" cy="3.5" r="2.3"/></g></svg>
<div class="r" style="left:804px;top:67px;width:1390px;height:45px;overflow:hidden"><div class="a" style="left:33px;top:23.4px;font-family:'Liberation Sans';font-size:26px;color:#a9a9a9;font-weight:400;letter-spacing:0.6px;">Users</div>
<div class="a" style="left:134.5px;top:23.4px;font-family:'Liberation Sans';font-size:26px;color:#a9a9a9;font-weight:400;letter-spacing:0.6px;">clairbee</div>
<div class="a" style="left:263px;top:23.4px;font-family:'Liberation Sans';font-size:26px;color:#a9a9a9;font-weight:400;letter-spacing:0.6px;">.partcad</div>
<div class="a" style="left:395.5px;top:23.4px;font-family:'Liberation Sans';font-size:26px;color:#a9a9a9;font-weight:400;letter-spacing:0.6px;">git</div>
<div class="a" style="left:459px;top:23.4px;font-family:'Liberation Sans';font-size:26px;color:#a9a9a9;font-weight:400;letter-spacing:0.85px;">e9dcf6aff655e52467d36c284ceea90b1d39d7121b92341e9ea3529595abf83b</div>
<svg style="left:112px;top:15px;" width="14" height="20" viewBox="0 0 14 20"><path d="M1.5 1.5 L11.5 9.5 L1.5 17.5" fill="none" stroke="#a9a9a9" stroke-width="2"/></svg>
<svg style="left:242px;top:15px;" width="14" height="20" viewBox="0 0 14 20"><path d="M1.5 1.5 L11.5 9.5 L1.5 17.5" fill="none" stroke="#a9a9a9" stroke-width="2"/></svg>
<svg style="left:375px;top:15px;" width="14" height="20" viewBox="0 0 14 20"><path d="M1.5 1.5 L11.5 9.5 L1.5 17.5" fill="none" stroke="#a9a9a9" stroke-width="2"/></svg>
<svg style="left:438px;top:15px;" width="14" height="20" viewBox="0 0 14 20"><path d="M1.5 1.5 L11.5 9.5 L1.5 17.5" fill="none" stroke="#a9a9a9" stroke-width="2"/></svg>
</div><div class="r" style="left:804px;top:112px;width:1205px;height:1506px;overflow:hidden"><div class="r" style="left:218px;top:0px;width:987px;height:4px;background:#282828;"></div>
<div class="r" style="left:218px;top:32px;width:987px;height:4px;background:#282828;"></div>
<div class="r" style="left:132px;top:0px;width:86px;height:36px;background:#474747;"></div>
<div class="a" style="left:64.6px;top:19.8px;font-family:'Liberation Mono';font-size:24px;color:#cccccc;font-weight:400;letter-spacing:0px;">1</div>
<div class="a" style="left:132px;top:19.8px;font-family:'Liberation Mono';font-size:24px;color:#cccccc;font-weight:400;letter-spacing:0px;"><span style="color:#569cd6">links</span><span style="color:#cccccc">:</span></div>
<div class="a" style="left:64.6px;top:55.8px;font-family:'Liberation Mono';font-size:24px;color:#6e7681;font-weight:400;letter-spacing:0px;">2</div>
<div class="r" style="left:132.0px;top:36px;width:2px;height:36px;background:#404040;"></div>
<div class="a" style="left:132px;top:55.8px;font-family:'Liberation Mono';font-size:24px;color:#cccccc;font-weight:400;letter-spacing:0px;">  <span style="color:#cccccc">- </span><span style="color:#569cd6">part</span><span style="color:#cccccc">:</span> <span style="color:#ce9178">motion/shaft_8mmREX_72mm</span></div>
<div class="a" style="left:64.6px;top:91.8px;font-family:'Liberation Mono';font-size:24px;color:#6e7681;font-weight:400;letter-spacing:0px;">3</div>
<div class="r" style="left:132.0px;top:72px;width:2px;height:36px;background:#404040;"></div>
<div class="r" style="left:160.8px;top:72px;width:2px;height:36px;background:#404040;"></div>
<div class="a" style="left:132px;top:91.8px;font-family:'Liberation Mono';font-size:24px;color:#cccccc;font-weight:400;letter-spacing:0px;">    <span style="color:#569cd6">name</span><span style="color:#cccccc">:</span> <span style="color:#ce9178">shaft</span></div>
<div class="a" style="left:64.6px;top:127.8px;font-family:'Liberation Mono';font-size:24px;color:#6e7681;font-weight:400;letter-spacing:0px;">4</div>
<div class="r" style="left:132.0px;top:108px;width:2px;height:36px;background:#404040;"></div>
<div class="a" style="left:132px;top:127.8px;font-family:'Liberation Mono';font-size:24px;color:#cccccc;font-weight:400;letter-spacing:0px;"></div>
<div class="a" style="left:64.6px;top:163.8px;font-family:'Liberation Mono';font-size:24px;color:#6e7681;font-weight:400;letter-spacing:0px;">5</div>
<div class="r" style="left:132.0px;top:144px;width:2px;height:36px;background:#404040;"></div>
<div class="a" style="left:132px;top:163.8px;font-family:'Liberation Mono';font-size:24px;color:#cccccc;font-weight:400;letter-spacing:0px;">  <span style="color:#cccccc">- </span><span style="color:#569cd6">part</span><span style="color:#cccccc">:</span> <span style="color:#ce9178">motion/hub_sonic_8mmREX</span></div>
<div class="a" style="left:64.6px;top:199.8px;font-family:'Liberation Mono';font-size:24px;color:#6e7681;font-weight:400;letter-spacing:0px;">6</div>
<div class="r" style="left:132.0px;top:180px;width:2px;height:36px;background:#404040;"></div>
<div class="r" style="left:160.8px;top:180px;width:2px;height:36px;background:#404040;"></div>
<div class="a" style="left:132px;top:199.8px;font-family:'Liberation Mono';font-size:24px;color:#cccccc;font-weight:400;letter-spacing:0px;">    <span style="color:#569cd6">name</span><span style="color:#cccccc">:</span> <span style="color:#ce9178">gear-hub</span></div>
<div class="a" style="left:64.6px;top:235.8px;font-family:'Liberation Mono';font-size:24px;color:#6e7681;font-weight:400;letter-spacing:0px;">7</div>
<div class="r" style="left:132.0px;top:216px;width:2px;height:36px;background:#404040;"></div>
<div class="r" style="left:160.8px;top:216px;width:2px;height:36px;background:#404040;"></div>
<div class="a" style="left:132px;top:235.8px;font-family:'Liberation Mono';font-size:24px;color:#cccccc;font-weight:400;letter-spacing:0px;">    <span style="color:#569cd6">connect</span><span style="color:#cccccc">:</span></div>
<div class="a" style="left:64.6px;top:271.8px;font-family:'Liberation Mono';font-size:24px;color:#6e7681;font-weight:400;letter-spacing:0px;">8</div>
<div class="r" style="left:132.0px;top:252px;width:2px;height:36px;background:#404040;"></div>
<div class="r" style="left:160.8px;top:252px;width:2px;height:36px;background:#404040;"></div>
<div class="r" style="left:189.6px;top:252px;width:2px;height:36px;background:#404040;"></div>
<div class="a" style="left:132px;top:271.8px;font-family:'Liberation Mono';font-size:24px;color:#cccccc;font-weight:400;letter-spacing:0px;">      <span style="color:#569cd6">withInstance</span><span style="color:#cccccc">:</span> <span style="color:#ce9178">ledged</span></div>
<div class="a" style="left:64.6px;top:307.8px;font-family:'Liberation Mono';font-size:24px;color:#6e7681;font-weight:400;letter-spacing:0px;">9</div>
<div class="r" style="left:132.0px;top:288px;width:2px;height:36px;background:#404040;"></div>
<div class="r" style="left:160.8px;top:288px;width:2px;height:36px;background:#404040;"></div>
<div class="r" style="left:189.6px;top:288px;width:2px;height:36px;background:#404040;"></div>
<div class="a" style="left:132px;top:307.8px;font-family:'Liberation Mono';font-size:24px;color:#cccccc;font-weight:400;letter-spacing:0px;">      <span style="color:#569cd6">name</span><span style="color:#cccccc">:</span> <span style="color:#ce9178">shaft</span></div>
<div class="a" style="left:50.2px;top:343.8px;font-family:'Liberation Mono';font-size:24px;color:#6e7681;font-weight:400;letter-spacing:0px;">10</div>
<div class="r" style="left:132.0px;top:324px;width:2px;height:36px;background:#404040;"></div>
<div class="r" style="left:160.8px;top:324px;width:2px;height:36px;background:#404040;"></div>
<div class="r" style="left:189.6px;top:324px;width:2px;height:36px;background:#404040;"></div>
<div class="a" style="left:132px;top:343.8px;font-family:'Liberation Mono';font-size:24px;color:#cccccc;font-weight:400;letter-spacing:0px;">      <span style="color:#569cd6">toInstance</span><span style="color:#cccccc">:</span> <span style="color:#ce9178">clip-side</span></div>
<div class="a" style="left:50.2px;top:379.8px;font-family:'Liberation Mono';font-size:24px;color:#6e7681;font-weight:400;letter-spacing:0px;">11</div>
<div class="r" style="left:132.0px;top:360px;width:2px;height:36px;background:#404040;"></div>
<div class="r" style="left:160.8px;top:360px;width:2px;height:36px;background:#404040;"></div>
<div class="r" style="left:189.6px;top:360px;width:2px;height:36px;background:#404040;"></div>
<div class="a" style="left:132px;top:379.8px;font-family:'Liberation Mono';font-size:24px;color:#cccccc;font-weight:400;letter-spacing:0px;">      <span style="color:#569cd6">toParams</span><span style="color:#cccccc">:</span></div>
<div class="a" style="left:50.2px;top:415.8px;font-family:'Liberation Mono';font-size:24px;color:#6e7681;font-weight:400;letter-spacing:0px;">12</div>
<div class="r" style="left:132.0px;top:396px;width:2px;height:36px;background:#404040;"></div>
<div class="r" style="left:160.8px;top:396px;width:2px;height:36px;background:#404040;"></div>
<div class="r" style="left:189.6px;top:396px;width:2px;height:36px;background:#404040;"></div>
<div class="r" style="left:218.4px;top:396px;width:2px;height:36px;background:#404040;"></div>
<div class="a" style="left:132px;top:415.8px;font-family:'Liberation Mono';font-size:24px;color:#cccccc;font-weight:400;letter-spacing:0px;">        <span style="color:#569cd6">moveZ</span><span style="color:#cccccc">:</span> <span style="color:#b5cea8">26.5</span></div>
<div class="a" style="left:50.2px;top:451.8px;font-family:'Liberation Mono';font-size:24px;color:#6e7681;font-weight:400;letter-spacing:0px;">13</div>
<div class="r" style="left:132.0px;top:432px;width:2px;height:36px;background:#404040;"></div>
<div class="a" style="left:132px;top:451.8px;font-family:'Liberation Mono';font-size:24px;color:#cccccc;font-weight:400;letter-spacing:0px;"></div>
<div class="a" style="left:50.2px;top:487.8px;font-family:'Liberation Mono';font-size:24px;color:#6e7681;font-weight:400;letter-spacing:0px;">14</div>
<div class="r" style="left:132.0px;top:468px;width:2px;height:36px;background:#404040;"></div>
<div class="a" style="left:132px;top:487.8px;font-family:'Liberation Mono';font-size:24px;color:#cccccc;font-weight:400;letter-spacing:0px;">  <span style="color:#cccccc">- </span><span style="color:#569cd6">part</span><span style="color:#cccccc">:</span> <span style="color:#ce9178">motion/worm_gear_28t</span></div>
<div class="a" style="left:50.2px;top:523.8px;font-family:'Liberation Mono';font-size:24px;color:#6e7681;font-weight:400;letter-spacing:0px;">15</div>
<div class="r" style="left:132.0px;top:504px;width:2px;height:36px;background:#404040;"></div>
<div class="r" style="left:160.8px;top:504px;width:2px;height:36px;background:#404040;"></div>
<div class="a" style="left:132px;top:523.8px;font-family:'Liberation Mono';font-size:24px;color:#cccccc;font-weight:400;letter-spacing:0px;">    <span style="color:#569cd6">name</span><span style="color:#cccccc">:</span> <span style="color:#ce9178">gear</span></div>
<div class="a" style="left:50.2px;top:559.8px;font-family:'Liberation Mono';font-size:24px;color:#6e7681;font-weight:400;letter-spacing:0px;">16</div>
<div class="r" style="left:132.0px;top:540px;width:2px;height:36px;background:#404040;"></div>
<div class="r" style="left:160.8px;top:540px;width:2px;height:36px;background:#404040;"></div>
<div class="a" style="left:132px;top:559.8px;font-family:'Liberation Mono';font-size:24px;color:#cccccc;font-weight:400;letter-spacing:0px;">    <span style="color:#569cd6">connect</span><span style="color:#cccccc">:</span></div>
<div class="a" style="left:50.2px;top:595.8px;font-family:'Liberation Mono';font-size:24px;color:#6e7681;font-weight:400;letter-spacing:0px;">17</div>
<div class="r" style="left:132.0px;top:576px;width:2px;height:36px;background:#404040;"></div>
<div class="r" style="left:160.8px;top:576px;width:2px;height:36px;background:#404040;"></div>
<div class="r" style="left:189.6px;top:576px;width:2px;height:36px;background:#404040;"></div>
<div class="a" style="left:132px;top:595.8px;font-family:'Liberation Mono';font-size:24px;color:#cccccc;font-weight:400;letter-spacing:0px;">      <span style="color:#569cd6">with</span><span style="color:#cccccc">:</span> <span style="color:#ce9178">4xM4-16mm-pattern-threaded-thru-4mm</span></div>
<div class="a" style="left:50.2px;top:631.8px;font-family:'Liberation Mono';font-size:24px;color:#6e7681;font-weight:400;letter-spacing:0px;">18</div>
<div class="r" style="left:132.0px;top:612px;width:2px;height:36px;background:#404040;"></div>
<div class="r" style="left:160.8px;top:612px;width:2px;height:36px;background:#404040;"></div>
<div class="r" style="left:189.6px;top:612px;width:2px;height:36px;background:#404040;"></div>
<div class="a" style="left:132px;top:631.8px;font-family:'Liberation Mono';font-size:24px;color:#cccccc;font-weight:400;letter-spacing:0px;">      <span style="color:#569cd6">withInstance</span><span style="color:#cccccc">:</span> <span style="color:#ce9178">inner</span></div>
<div class="a" style="left:50.2px;top:667.8px;font-family:'Liberation Mono';font-size:24px;color:#6e7681;font-weight:400;letter-spacing:0px;">19</div>
<div class="r" style="left:132.0px;top:648px;width:2px;height:36px;background:#404040;"></div>
<div class="r" style="left:160.8px;top:648px;width:2px;height:36px;background:#404040;"></div>
<div class="r" style="left:189.6px;top:648px;width:2px;height:36px;background:#404040;"></div>
<div class="a" style="left:132px;top:667.8px;font-family:'Liberation Mono';font-size:24px;color:#cccccc;font-weight:400;letter-spacing:0px;">      <span style="color:#569cd6">name</span><span style="color:#cccccc">:</span> <span style="color:#ce9178">gear-hub</span></div>
<div class="a" style="left:50.2px;top:703.8px;font-family:'Liberation Mono';font-size:24px;color:#6e7681;font-weight:400;letter-spacing:0px;">20</div>
<div class="r" style="left:132.0px;top:684px;width:2px;height:36px;background:#404040;"></div>
<div class="r" style="left:160.8px;top:684px;width:2px;height:36px;background:#404040;"></div>
<div class="r" style="left:189.6px;top:684px;width:2px;height:36px;background:#404040;"></div>
<div class="a" style="left:132px;top:703.8px;font-family:'Liberation Mono';font-size:24px;color:#cccccc;font-weight:400;letter-spacing:0px;">      <span style="color:#569cd6">to</span><span style="color:#cccccc">:</span> <span style="color:#ce9178">4xM4-16mm-pattern-thru-8mm</span></div>
<div class="a" style="left:50.2px;top:739.8px;font-family:'Liberation Mono';font-size:24px;color:#6e7681;font-weight:400;letter-spacing:0px;">21</div>
<div class="r" style="left:132.0px;top:720px;width:2px;height:36px;background:#404040;"></div>
<div class="r" style="left:160.8px;top:720px;width:2px;height:36px;background:#404040;"></div>
<div class="r" style="left:189.6px;top:720px;width:2px;height:36px;background:#404040;"></div>
<div class="a" style="left:132px;top:739.8px;font-family:'Liberation Mono';font-size:24px;color:#cccccc;font-weight:400;letter-spacing:0px;">      <span style="color:#569cd6">toInstance</span><span style="color:#cccccc">:</span> <span style="color:#ce9178">ledged</span></div>
<div class="a" style="left:50.2px;top:775.8px;font-family:'Liberation Mono';font-size:24px;color:#6e7681;font-weight:400;letter-spacing:0px;">22</div>
<div class="r" style="left:132.0px;top:756px;width:2px;height:36px;background:#404040;"></div>
<div class="a" style="left:132px;top:775.8px;font-family:'Liberation Mono';font-size:24px;color:#cccccc;font-weight:400;letter-spacing:0px;"></div>
<div class="a" style="left:50.2px;top:811.8px;font-family:'Liberation Mono';font-size:24px;color:#6e7681;font-weight:400;letter-spacing:0px;">23</div>
<div class="r" style="left:132.0px;top:792px;width:2px;height:36px;background:#404040;"></div>
<div class="a" style="left:132px;top:811.8px;font-family:'Liberation Mono';font-size:24px;color:#cccccc;font-weight:400;letter-spacing:0px;">  <span style="color:#cccccc">- </span><span style="color:#569cd6">part</span><span style="color:#cccccc">:</span> <span style="color:#ce9178">hardware/screw_m4_0.7mm_12mm</span></div>
<div class="a" style="left:50.2px;top:847.8px;font-family:'Liberation Mono';font-size:24px;color:#6e7681;font-weight:400;letter-spacing:0px;">24</div>
<div class="r" style="left:132.0px;top:828px;width:2px;height:36px;background:#404040;"></div>
<div class="r" style="left:160.8px;top:828px;width:2px;height:36px;background:#404040;"></div>
<div class="a" style="left:132px;top:847.8px;font-family:'Liberation Mono';font-size:24px;color:#cccccc;font-weight:400;letter-spacing:0px;">    <span style="color:#569cd6">name</span><span style="color:#cccccc">:</span> <span style="color:#ce9178">hub-screw-TL</span></div>
<div class="a" style="left:50.2px;top:883.8px;font-family:'Liberation Mono';font-size:24px;color:#6e7681;font-weight:400;letter-spacing:0px;">25</div>
<div class="r" style="left:132.0px;top:864px;width:2px;height:36px;background:#404040;"></div>
<div class="r" style="left:160.8px;top:864px;width:2px;height:36px;background:#404040;"></div>
<div class="a" style="left:132px;top:883.8px;font-family:'Liberation Mono';font-size:24px;color:#cccccc;font-weight:400;letter-spacing:0px;">    <span style="color:#569cd6">connect</span><span style="color:#cccccc">:</span></div>
<div class="a" style="left:50.2px;top:919.8px;font-family:'Liberation Mono';font-size:24px;color:#6e7681;font-weight:400;letter-spacing:0px;">26</div>
<div class="r" style="left:132.0px;top:900px;width:2px;height:36px;background:#404040;"></div>
<div class="r" style="left:160.8px;top:900px;width:2px;height:36px;background:#404040;"></div>
<div class="r" style="left:189.6px;top:900px;width:2px;height:36px;background:#404040;"></div>
<div class="a" style="left:132px;top:919.8px;font-family:'Liberation Mono';font-size:24px;color:#cccccc;font-weight:400;letter-spacing:0px;">      <span style="color:#569cd6">withParams</span><span style="color:#cccccc">:</span></div>
<div class="a" style="left:50.2px;top:955.8px;font-family:'Liberation Mono';font-size:24px;color:#6e7681;font-weight:400;letter-spacing:0px;">27</div>
<div class="r" style="left:132.0px;top:936px;width:2px;height:36px;background:#404040;"></div>
<div class="r" style="left:160.8px;top:936px;width:2px;height:36px;background:#404040;"></div>
<div class="r" style="left:189.6px;top:936px;width:2px;height:36px;background:#404040;"></div>
<div class="r" style="left:218.4px;top:936px;width:2px;height:36px;background:#404040;"></div>
<div class="a" style="left:132px;top:955.8px;font-family:'Liberation Mono';font-size:24px;color:#cccccc;font-weight:400;letter-spacing:0px;">        <span style="color:#569cd6">moveZ</span><span style="color:#cccccc">:</span> <span style="color:#b5cea8">8.0</span></div>
<div class="a" style="left:50.2px;top:991.8px;font-family:'Liberation Mono';font-size:24px;color:#6e7681;font-weight:400;letter-spacing:0px;">28</div>
<div class="r" style="left:132.0px;top:972px;width:2px;height:36px;background:#404040;"></div>
<div class="r" style="left:160.8px;top:972px;width:2px;height:36px;background:#404040;"></div>
<div class="r" style="left:189.6px;top:972px;width:2px;height:36px;background:#404040;"></div>
<div class="a" style="left:132px;top:991.8px;font-family:'Liberation Mono';font-size:24px;color:#cccccc;font-weight:400;letter-spacing:0px;">      <span style="color:#569cd6">name</span><span style="color:#cccccc">:</span> <span style="color:#ce9178">gear</span></div>
<div class="a" style="left:50.2px;top:1027.8px;font-family:'Liberation Mono';font-size:24px;color:#6e7681;font-weight:400;letter-spacing:0px;">29</div>
<div class="r" style="left:132.0px;top:1008px;width:2px;height:36px;background:#404040;"></div>
<div class="r" style="left:160.8px;top:1008px;width:2px;height:36px;background:#404040;"></div>
<div class="r" style="left:189.6px;top:1008px;width:2px;height:36px;background:#404040;"></div>
<div class="a" style="left:132px;top:1027.8px;font-family:'Liberation Mono';font-size:24px;color:#cccccc;font-weight:400;letter-spacing:0px;">      <span style="color:#569cd6">toInstance</span><span style="color:#cccccc">:</span> <span style="color:#ce9178">inner-TL</span></div>
<div class="a" style="left:50.2px;top:1063.8px;font-family:'Liberation Mono';font-size:24px;color:#6e7681;font-weight:400;letter-spacing:0px;">30</div>
<div class="r" style="left:132.0px;top:1044px;width:2px;height:36px;background:#404040;"></div>
<div class="a" style="left:132px;top:1063.8px;font-family:'Liberation Mono';font-size:24px;color:#cccccc;font-weight:400;letter-spacing:0px;"></div>
<div class="a" style="left:50.2px;top:1099.8px;font-family:'Liberation Mono';font-size:24px;color:#6e7681;font-weight:400;letter-spacing:0px;">31</div>
<div class="r" style="left:132.0px;top:1080px;width:2px;height:36px;background:#404040;"></div>
<div class="a" style="left:132px;top:1099.8px;font-family:'Liberation Mono';font-size:24px;color:#cccccc;font-weight:400;letter-spacing:0px;">  <span style="color:#cccccc">- </span><span style="color:#569cd6">part</span><span style="color:#cccccc">:</span> <span style="color:#ce9178">hardware/screw_m4_0.7mm_12mm</span></div>
<div class="a" style="left:50.2px;top:1135.8px;font-family:'Liberation Mono';font-size:24px;color:#6e7681;font-weight:400;letter-spacing:0px;">32</div>
<div class="r" style="left:132.0px;top:1116px;width:2px;height:36px;background:#404040;"></div>
<div class="r" style="left:160.8px;top:1116px;width:2px;height:36px;background:#404040;"></div>
<div class="a" style="left:132px;top:1135.8px;font-family:'Liberation Mono';font-size:24px;color:#cccccc;font-weight:400;letter-spacing:0px;">    <span style="color:#569cd6">name</span><span style="color:#cccccc">:</span> <span style="color:#ce9178">hub-screw-TR</span></div>
<div class="a" style="left:50.2px;top:1171.8px;font-family:'Liberation Mono';font-size:24px;color:#6e7681;font-weight:400;letter-spacing:0px;">33</div>
<div class="r" style="left:132.0px;top:1152px;width:2px;height:36px;background:#404040;"></div>
<div class="r" style="left:160.8px;top:1152px;width:2px;height:36px;background:#404040;"></div>
<div class="a" style="left:132px;top:1171.8px;font-family:'Liberation Mono';font-size:24px;color:#cccccc;font-weight:400;letter-spacing:0px;">    <span style="color:#569cd6">connect</span><span style="color:#cccccc">:</span></div>
<div class="a" style="left:50.2px;top:1207.8px;font-family:'Liberation Mono';font-size:24px;color:#6e7681;font-weight:400;letter-spacing:0px;">34</div>
<div class="r" style="left:132.0px;top:1188px;width:2px;height:36px;background:#404040;"></div>
<div class="r" style="left:160.8px;top:1188px;width:2px;height:36px;background:#404040;"></div>
<div class="r" style="left:189.6px;top:1188px;width:2px;height:36px;background:#404040;"></div>
<div class="a" style="left:132px;top:1207.8px;font-family:'Liberation Mono';font-size:24px;color:#cccccc;font-weight:400;letter-spacing:0px;">      <span style="color:#569cd6">withParams</span><span style="color:#cccccc">:</span></div>
<div class="a" style="left:50.2px;top:1243.8px;font-family:'Liberation Mono';font-size:24px;color:#6e7681;font-weight:400;letter-spacing:0px;">35</div>
<div class="r" style="left:132.0px;top:1224px;width:2px;height:36px;background:#404040;"></div>
<div class="r" style="left:160.8px;top:1224px;width:2px;height:36px;background:#404040;"></div>
<div class="r" style="left:189.6px;top:1224px;width:2px;height:36px;background:#404040;"></div>
<div class="r" style="left:218.4px;top:1224px;width:2px;height:36px;background:#404040;"></div>
<div class="a" style="left:132px;top:1243.8px;font-family:'Liberation Mono';font-size:24px;color:#cccccc;font-weight:400;letter-spacing:0px;">        <span style="color:#569cd6">moveZ</span><span style="color:#cccccc">:</span> <span style="color:#b5cea8">8.0</span></div>
<div class="a" style="left:50.2px;top:1279.8px;font-family:'Liberation Mono';font-size:24px;color:#6e7681;font-weight:400;letter-spacing:0px;">36</div>
<div class="r" style="left:132.0px;top:1260px;width:2px;height:36px;background:#404040;"></div>
<div class="r" style="left:160.8px;top:1260px;width:2px;height:36px;background:#404040;"></div>
<div class="r" style="left:189.6px;top:1260px;width:2px;height:36px;background:#404040;"></div>
<div class="a" style="left:132px;top:1279.8px;font-family:'Liberation Mono';font-size:24px;color:#cccccc;font-weight:400;letter-spacing:0px;">      <span style="color:#569cd6">name</span><span style="color:#cccccc">:</span> <span style="color:#ce9178">gear</span></div>
<div class="a" style="left:50.2px;top:1315.8px;font-family:'Liberation Mono';font-size:24px;color:#6e7681;font-weight:400;letter-spacing:0px;">37</div>
<div class="r" style="left:132.0px;top:1296px;width:2px;height:36px;background:#404040;"></div>
<div class="r" style="left:160.8px;top:1296px;width:2px;height:36px;background:#404040;"></div>
<div class="r" style="left:189.6px;top:1296px;width:2px;height:36px;background:#404040;"></div>
<div class="a" style="left:132px;top:1315.8px;font-family:'Liberation Mono';font-size:24px;color:#cccccc;font-weight:400;letter-spacing:0px;">      <span style="color:#569cd6">toInstance</span><span style="color:#cccccc">:</span> <span style="color:#ce9178">inner-TR</span></div>
<div class="a" style="left:50.2px;top:1351.8px;font-family:'Liberation Mono';font-size:24px;color:#6e7681;font-weight:400;letter-spacing:0px;">38</div>
<div class="r" style="left:132.0px;top:1332px;width:2px;height:36px;background:#404040;"></div>
<div class="a" style="left:132px;top:1351.8px;font-family:'Liberation Mono';font-size:24px;color:#cccccc;font-weight:400;letter-spacing:0px;"></div>
<div class="a" style="left:50.2px;top:1387.8px;font-family:'Liberation Mono';font-size:24px;color:#6e7681;font-weight:400;letter-spacing:0px;">39</div>
<div class="r" style="left:132.0px;top:1368px;width:2px;height:36px;background:#404040;"></div>
<div class="a" style="left:132px;top:1387.8px;font-family:'Liberation Mono';font-size:24px;color:#cccccc;font-weight:400;letter-spacing:0px;">  <span style="color:#cccccc">- </span><span style="color:#569cd6">part</span><span style="color:#cccccc">:</span> <span style="color:#ce9178">hardware/screw_m4_0.7mm_12mm</span></div>
<div class="a" style="left:50.2px;top:1423.8px;font-family:'Liberation Mono';font-size:24px;color:#6e7681;font-weight:400;letter-spacing:0px;">40</div>
<div class="r" style="left:132.0px;top:1404px;width:2px;height:36px;background:#404040;"></div>
<div class="r" style="left:160.8px;top:1404px;width:2px;height:36px;background:#404040;"></div>
<div class="a" style="left:132px;top:1423.8px;font-family:'Liberation Mono';font-size:24px;color:#cccccc;font-weight:400;letter-spacing:0px;">    <span style="color:#569cd6">name</span><span style="color:#cccccc">:</span> <span style="color:#ce9178">hub-screw-BL</span></div>
<div class="a" style="left:50.2px;top:1459.8px;font-family:'Liberation Mono';font-size:24px;color:#6e7681;font-weight:400;letter-spacing:0px;">41</div>
<div class="r" style="left:132.0px;top:1440px;width:2px;height:36px;background:#404040;"></div>
<div class="r" style="left:160.8px;top:1440px;width:2px;height:36px;background:#404040;"></div>
<div class="a" style="left:132px;top:1459.8px;font-family:'Liberation Mono';font-size:24px;color:#cccccc;font-weight:400;letter-spacing:0px;">    <span style="color:#569cd6">connect</span><span style="color:#cccccc">:</span></div>
<div class="a" style="left:50.2px;top:1495.8px;font-family:'Liberation Mono';font-size:24px;color:#6e7681;font-weight:400;letter-spacing:0px;">42</div>
<div class="r" style="left:132.0px;top:1476px;width:2px;height:36px;background:#404040;"></div>
<div class="r" style="left:160.8px;top:1476px;width:2px;height:36px;background:#404040;"></div>
<div class="r" style="left:189.6px;top:1476px;width:2px;height:36px;background:#404040;"></div>
<div class="a" style="left:132px;top:1495.8px;font-family:'Liberation Mono';font-size:24px;color:#cccccc;font-weight:400;letter-spacing:0px;">      <span style="color:#569cd6">withParams</span><span style="color:#cccccc">:</span></div>
<div class="a" style="left:50.2px;top:1531.8px;font-family:'Liberation Mono';font-size:24px;color:#6e7681;font-weight:400;letter-spacing:0px;">43</div>
<div class="r" style="left:132.0px;top:1512px;width:2px;height:36px;background:#404040;"></div>
<div class="r" style="left:160.8px;top:1512px;width:2px;height:36px;background:#404040;"></div>
<div class="r" style="left:189.6px;top:1512px;width:2px;height:36px;background:#404040;"></div>
<div class="r" style="left:218.4px;top:1512px;width:2px;height:36px;background:#404040;"></div>
<div class="a" style="left:132px;top:1531.8px;font-family:'Liberation Mono';font-size:24px;color:#cccccc;font-weight:400;letter-spacing:0px;">        <span style="color:#569cd6">moveZ</span><span style="color:#cccccc">:</span> <span style="color:#b5cea8">8.0</span></div>
</div><svg style="left:2010px;top:112px" width="156" height="1506" viewBox="0 0 156 1506"><defs><pattern id="mmp" width="2" height="4" patternUnits="userSpaceOnUse"><rect x="0" y="0" width="1.5" height="4" fill="#fff"/></pattern><mask id="mmm"><rect width="156" height="1506" fill="url(#mmp)"/></mask></defs><g opacity="0.55" mask="url(#mmm)"><rect x="0" y="0.8" width="10" height="2.6" fill="#569cd6"/><rect x="10" y="0.8" width="2" height="2.6" fill="#cccccc"/><rect x="4" y="4.8" width="2" height="2.6" fill="#cccccc"/><rect x="8" y="4.8" width="8" height="2.6" fill="#569cd6"/><rect x="16" y="4.8" width="2" height="2.6" fill="#cccccc"/><rect x="20" y="4.8" width="48" height="2.6" fill="#ce9178"/><rect x="8" y="8.8" width="8" height="2.6" fill="#569cd6"/><rect x="16" y="8.8" width="2" height="2.6" fill="#cccccc"/><rect x="20" y="8.8" width="10" height="2.6" fill="#ce9178"/><rect x="4" y="16.8" width="2" height="2.6" fill="#cccccc"/><rect x="8" y="16.8" width="8" height="2.6" fill="#569cd6"/><rect x="16" y="16.8" width="2" height="2.6" fill="#cccccc"/><rect x="20" y="16.8" width="46" height="2.6" fill="#ce9178"/><rect x="8" y="20.8" width="8" height="2.6" fill="#569cd6"/><rect x="16" y="20.8" width="2" height="2.6" fill="#cccccc"/><rect x="20" y="20.8" width="16" height="2.6" fill="#ce9178"/><rect x="8" y="24.8" width="14" height="2.6" fill="#569cd6"/><rect x="22" y="24.8" width="2" height="2.6" fill="#cccccc"/><rect x="12" y="28.8" width="24" height="2.6" fill="#569cd6"/><rect x="36" y="28.8" width="2" height="2.6" fill="#cccccc"/><rect x="40" y="28.8" width="12" height="2.6" fill="#ce9178"/><rect x="12" y="32.8" width="8" height="2.6" fill="#569cd6"/><rect x="20" y="32.8" width="2" height="2.6" fill="#cccccc"/><rect x="24" y="32.8" width="10" height="2.6" fill="#ce9178"/><rect x="12" y="36.8" width="20" height="2.6" fill="#569cd6"/><rect x="32" y="36.8" width="2" height="2.6" fill="#cccccc"/><rect x="36" y="36.8" width="18" height="2.6" fill="#ce9178"/><rect x="12" y="40.8" width="16" height="2.6" fill="#569cd6"/><rect x="28" y="40.8" width="2" height="2.6" fill="#cccccc"/><rect x="16" y="44.8" width="10" height="2.6" fill="#569cd6"/><rect x="26" y="44.8" width="2" height="2.6" fill="#cccccc"/><rect x="30" y="44.8" width="8" height="2.6" fill="#b5cea8"/><rect x="4" y="52.8" width="2" height="2.6" fill="#cccccc"/><rect x="8" y="52.8" width="8" height="2.6" fill="#569cd6"/><rect x="16" y="52.8" width="2" height="2.6" fill="#cccccc"/><rect x="20" y="52.8" width="40" height="2.6" fill="#ce9178"/><rect x="8" y="56.8" width="8" height="2.6" fill="#569cd6"/><rect x="16" y="56.8" width="2" height="2.6" fill="#cccccc"/><rect x="20" y="56.8" width="8" height="2.6" fill="#ce9178"/><rect x="8" y="60.8" width="14" height="2.6" fill="#569cd6"/><rect x="22" y="60.8" width="2" height="2.6" fill="#cccccc"/><rect x="12" y="64.8" width="8" height="2.6" fill="#569cd6"/><rect x="20" y="64.8" width="2" height="2.6" fill="#cccccc"/><rect x="24" y="64.8" width="70" height="2.6" fill="#ce9178"/><rect x="12" y="68.8" width="24" height="2.6" fill="#569cd6"/><rect x="36" y="68.8" width="2" height="2.6" fill="#cccccc"/><rect x="40" y="68.8" width="10" height="2.6" fill="#ce9178"/><rect x="12" y="72.8" width="8" height="2.6" fill="#569cd6"/><rect x="20" y="72.8" width="2" height="2.6" fill="#cccccc"/><rect x="24" y="72.8" width="16" height="2.6" fill="#ce9178"/><rect x="12" y="76.8" width="4" height="2.6" fill="#569cd6"/><rect x="16" y="76.8" width="2" height="2.6" fill="#cccccc"/><rect x="20" y="76.8" width="52" height="2.6" fill="#ce9178"/><rect x="12" y="80.8" width="20" height="2.6" fill="#569cd6"/><rect x="32" y="80.8" width="2" height="2.6" fill="#cccccc"/><rect x="36" y="80.8" width="12" height="2.6" fill="#ce9178"/><rect x="4" y="88.8" width="2" height="2.6" fill="#cccccc"/><rect x="8" y="88.8" width="8" height="2.6" fill="#569cd6"/><rect x="16" y="88.8" width="2" height="2.6" fill="#cccccc"/><rect x="20" y="88.8" width="56" height="2.6" fill="#ce9178"/><rect x="8" y="92.8" width="8" height="2.6" fill="#569cd6"/><rect x="16" y="92.8" width="2" height="2.6" fill="#cccccc"/><rect x="20" y="92.8" width="24" height="2.6" fill="#ce9178"/><rect x="8" y="96.8" width="14" height="2.6" fill="#569cd6"/><rect x="22" y="96.8" width="2" height="2.6" fill="#cccccc"/><rect x="12" y="100.8" width="20" height="2.6" fill="#569cd6"/><rect x="32" y="100.8" width="2" height="2.6" fill="#cccccc"/><rect x="16" y="104.8" width="10" height="2.6" fill="#569cd6"/><rect x="26" y="104.8" width="2" height="2.6" fill="#cccccc"/><rect x="30" y="104.8" width="6" height="2.6" fill="#b5cea8"/><rect x="12" y="108.8" width="8" height="2.6" fill="#569cd6"/><rect x="20" y="108.8" width="2" height="2.6" fill="#cccccc"/><rect x="24" y="108.8" width="8" height="2.6" fill="#ce9178"/><rect x="12" y="112.8" width="20" height="2.6" fill="#569cd6"/><rect x="32" y="112.8" width="2" height="2.6" fill="#cccccc"/><rect x="36" y="112.8" width="16" height="2.6" fill="#ce9178"/><rect x="4" y="120.8" width="2" height="2.6" fill="#cccccc"/><rect x="8" y="120.8" width="8" height="2.6" fill="#569cd6"/><rect x="16" y="120.8" width="2" height="2.6" fill="#cccccc"/><rect x="20" y="120.8" width="56" height="2.6" fill="#ce9178"/><rect x="8" y="124.8" width="8" height="2.6" fill="#569cd6"/><rect x="16" y="124.8" width="2" height="2.6" fill="#cccccc"/><rect x="20" y="124.8" width="24" height="2.6" fill="#ce9178"/><rect x="8" y="128.8" width="14" height="2.6" fill="#569cd6"/><rect x="22" y="128.8" width="2" height="2.6" fill="#cccccc"/><rect x="12" y="132.8" width="20" height="2.6" fill="#569cd6"/><rect x="32" y="132.8" width="2" height="2.6" fill="#cccccc"/><rect x="16" y="136.8" width="10" height="2.6" fill="#569cd6"/><rect x="26" y="136.8" width="2" height="2.6" fill="#cccccc"/><rect x="30" y="136.8" width="6" height="2.6" fill="#b5cea8"/><rect x="12" y="140.8" width="8" height="2.6" fill="#569cd6"/><rect x="20" y="140.8" width="2" height="2.6" fill="#cccccc"/><rect x="24" y="140.8" width="8" height="2.6" fill="#ce9178"/><rect x="12" y="144.8" width="20" height="2.6" fill="#569cd6"/><rect x="32" y="144.8" width="2" height="2.6" fill="#cccccc"/><rect x="36" y="144.8" width="16" height="2.6" fill="#ce9178"/><rect x="4" y="152.8" width="2" height="2.6" fill="#cccccc"/><rect x="8" y="152.8" width="8" height="2.6" fill="#569cd6"/><rect x="16" y="152.8" width="2" height="2.6" fill="#cccccc"/><rect x="20" y="152.8" width="56" height="2.6" fill="#ce9178"/><rect x="8" y="156.8" width="8" height="2.6" fill="#569cd6"/><rect x="16" y="156.8" width="2" height="2.6" fill="#cccccc"/><rect x="20" y="156.8" width="24" height="2.6" fill="#ce9178"/><rect x="8" y="160.8" width="14" height="2.6" fill="#569cd6"/><rect x="22" y="160.8" width="2" height="2.6" fill="#cccccc"/><rect x="12" y="164.8" width="20" height="2.6" fill="#569cd6"/><rect x="32" y="164.8" width="2" height="2.6" fill="#cccccc"/><rect x="16" y="168.8" width="10" height="2.6" fill="#569cd6"/><rect x="26" y="168.8" width="2" height="2.6" fill="#cccccc"/><rect x="30" y="168.8" width="6" height="2.6" fill="#b5cea8"/><rect x="12" y="172.8" width="8" height="2.6" fill="#569cd6"/><rect x="20" y="172.8" width="2" height="2.6" fill="#cccccc"/><rect x="24" y="172.8" width="8" height="2.6" fill="#ce9178"/><rect x="12" y="176.8" width="20" height="2.6" fill="#569cd6"/><rect x="32" y="176.8" width="2" height="2.6" fill="#cccccc"/><rect x="36" y="176.8" width="16" height="2.6" fill="#ce9178"/><rect x="4" y="184.8" width="2" height="2.6" fill="#cccccc"/><rect x="8" y="184.8" width="8" height="2.6" fill="#569cd6"/><rect x="16" y="184.8" width="2" height="2.6" fill="#cccccc"/><rect x="20" y="184.8" width="56" height="2.6" fill="#ce9178"/><rect x="8" y="188.8" width="8" height="2.6" fill="#569cd6"/><rect x="16" y="188.8" width="2" height="2.6" fill="#cccccc"/><rect x="20" y="188.8" width="24" height="2.6" fill="#ce9178"/><rect x="8" y="192.8" width="14" height="2.6" fill="#569cd6"/><rect x="22" y="192.8" width="2" height="2.6" fill="#cccccc"/><rect x="12" y="196.8" width="20" height="2.6" fill="#569cd6"/><rect x="32" y="196.8" width="2" height="2.6" fill="#cccccc"/><rect x="16" y="200.8" width="10" height="2.6" fill="#569cd6"/><rect x="26" y="200.8" width="2" height="2.6" fill="#cccccc"/><rect x="30" y="200.8" width="6" height="2.6" fill="#b5cea8"/><rect x="12" y="204.8" width="8" height="2.6" fill="#569cd6"/><rect x="20" y="204.8" width="2" height="2.6" fill="#cccccc"/><rect x="24" y="204.8" width="8" height="2.6" fill="#ce9178"/><rect x="12" y="208.8" width="20" height="2.6" fill="#569cd6"/><rect x="32" y="208.8" width="2" height="2.6" fill="#cccccc"/><rect x="36" y="208.8" width="16" height="2.6" fill="#ce9178"/><rect x="4" y="216.8" width="2" height="2.6" fill="#cccccc"/><rect x="8" y="216.8" width="8" height="2.6" fill="#569cd6"/><rect x="16" y="216.8" width="2" height="2.6" fill="#cccccc"/><rect x="20" y="216.8" width="58" height="2.6" fill="#ce9178"/><rect x="8" y="220.8" width="8" height="2.6" fill="#569cd6"/><rect x="16" y="220.8" width="2" height="2.6" fill="#cccccc"/><rect x="20" y="220.8" width="28" height="2.6" fill="#ce9178"/><rect x="8" y="224.8" width="14" height="2.6" fill="#569cd6"/><rect x="22" y="224.8" width="2" height="2.6" fill="#cccccc"/><rect x="12" y="228.8" width="24" height="2.6" fill="#569cd6"/><rect x="36" y="228.8" width="2" height="2.6" fill="#cccccc"/><rect x="40" y="228.8" width="22" height="2.6" fill="#ce9178"/><rect x="12" y="232.8" width="8" height="2.6" fill="#569cd6"/><rect x="20" y="232.8" width="2" height="2.6" fill="#cccccc"/><rect x="24" y="232.8" width="10" height="2.6" fill="#ce9178"/><rect x="12" y="236.8" width="20" height="2.6" fill="#569cd6"/><rect x="32" y="236.8" width="2" height="2.6" fill="#cccccc"/><rect x="36" y="236.8" width="8" height="2.6" fill="#ce9178"/><rect x="4" y="244.8" width="2" height="2.6" fill="#cccccc"/><rect x="8" y="244.8" width="8" height="2.6" fill="#569cd6"/><rect x="16" y="244.8" width="2" height="2.6" fill="#cccccc"/><rect x="20" y="244.8" width="42" height="2.6" fill="#ce9178"/><rect x="8" y="248.8" width="8" height="2.6" fill="#569cd6"/><rect x="16" y="248.8" width="2" height="2.6" fill="#cccccc"/><rect x="20" y="248.8" width="14" height="2.6" fill="#ce9178"/><rect x="8" y="252.8" width="14" height="2.6" fill="#569cd6"/><rect x="22" y="252.8" width="2" height="2.6" fill="#cccccc"/><rect x="12" y="256.8" width="24" height="2.6" fill="#569cd6"/><rect x="36" y="256.8" width="2" height="2.6" fill="#cccccc"/><rect x="40" y="256.8" width="24" height="2.6" fill="#ce9178"/><rect x="12" y="260.8" width="8" height="2.6" fill="#569cd6"/><rect x="20" y="260.8" width="2" height="2.6" fill="#cccccc"/><rect x="24" y="260.8" width="28" height="2.6" fill="#ce9178"/><rect x="4" y="268.8" width="2" height="2.6" fill="#cccccc"/><rect x="8" y="268.8" width="8" height="2.6" fill="#569cd6"/><rect x="16" y="268.8" width="2" height="2.6" fill="#cccccc"/><rect x="20" y="268.8" width="58" height="2.6" fill="#ce9178"/><rect x="8" y="272.8" width="8" height="2.6" fill="#569cd6"/><rect x="16" y="272.8" width="2" height="2.6" fill="#cccccc"/><rect x="20" y="272.8" width="28" height="2.6" fill="#ce9178"/><rect x="8" y="276.8" width="14" height="2.6" fill="#569cd6"/><rect x="22" y="276.8" width="2" height="2.6" fill="#cccccc"/><rect x="12" y="280.8" width="8" height="2.6" fill="#569cd6"/><rect x="20" y="280.8" width="2" height="2.6" fill="#cccccc"/><rect x="24" y="280.8" width="14" height="2.6" fill="#ce9178"/><rect x="12" y="284.8" width="20" height="2.6" fill="#569cd6"/><rect x="32" y="284.8" width="2" height="2.6" fill="#cccccc"/><rect x="36" y="284.8" width="26" height="2.6" fill="#ce9178"/><rect x="4" y="292.8" width="2" height="2.6" fill="#cccccc"/><rect x="8" y="292.8" width="8" height="2.6" fill="#569cd6"/><rect x="16" y="292.8" width="2" height="2.6" fill="#cccccc"/><rect x="20" y="292.8" width="62" height="2.6" fill="#ce9178"/><rect x="8" y="296.8" width="8" height="2.6" fill="#569cd6"/><rect x="16" y="296.8" width="2" height="2.6" fill="#cccccc"/><rect x="20" y="296.8" width="24" height="2.6" fill="#ce9178"/><rect x="8" y="300.8" width="14" height="2.6" fill="#569cd6"/><rect x="22" y="300.8" width="2" height="2.6" fill="#cccccc"/><rect x="12" y="304.8" width="24" height="2.6" fill="#569cd6"/><rect x="36" y="304.8" width="2" height="2.6" fill="#cccccc"/><rect x="40" y="304.8" width="10" height="2.6" fill="#ce9178"/><rect x="12" y="308.8" width="8" height="2.6" fill="#569cd6"/><rect x="20" y="308.8" width="2" height="2.6" fill="#cccccc"/><rect x="24" y="308.8" width="28" height="2.6" fill="#ce9178"/><rect x="12" y="312.8" width="20" height="2.6" fill="#569cd6"/><rect x="32" y="312.8" width="2" height="2.6" fill="#cccccc"/><rect x="36" y="312.8" width="22" height="2.6" fill="#ce9178"/><rect x="4" y="320.8" width="2" height="2.6" fill="#cccccc"/><rect x="8" y="320.8" width="8" height="2.6" fill="#569cd6"/><rect x="16" y="320.8" width="2" height="2.6" fill="#cccccc"/><rect x="20" y="320.8" width="46" height="2.6" fill="#ce9178"/><rect x="8" y="324.8" width="8" height="2.6" fill="#569cd6"/><rect x="16" y="324.8" width="2" height="2.6" fill="#cccccc"/><rect x="20" y="324.8" width="28" height="2.6" fill="#ce9178"/><rect x="8" y="328.8" width="14" height="2.6" fill="#569cd6"/><rect x="22" y="328.8" width="2" height="2.6" fill="#cccccc"/><rect x="12" y="332.8" width="24" height="2.6" fill="#569cd6"/><rect x="36" y="332.8" width="2" height="2.6" fill="#cccccc"/><rect x="40" y="332.8" width="8" height="2.6" fill="#ce9178"/><rect x="12" y="336.8" width="8" height="2.6" fill="#569cd6"/><rect x="20" y="336.8" width="2" height="2.6" fill="#cccccc"/><rect x="24" y="336.8" width="24" height="2.6" fill="#ce9178"/><rect x="12" y="340.8" width="20" height="2.6" fill="#569cd6"/><rect x="32" y="340.8" width="2" height="2.6" fill="#cccccc"/><rect x="36" y="340.8" width="10" height="2.6" fill="#ce9178"/><rect x="4" y="348.8" width="2" height="2.6" fill="#cccccc"/><rect x="8" y="348.8" width="8" height="2.6" fill="#569cd6"/><rect x="16" y="348.8" width="2" height="2.6" fill="#cccccc"/><rect x="20" y="348.8" width="48" height="2.6" fill="#ce9178"/><rect x="8" y="352.8" width="8" height="2.6" fill="#569cd6"/><rect x="16" y="352.8" width="2" height="2.6" fill="#cccccc"/><rect x="20" y="352.8" width="18" height="2.6" fill="#ce9178"/><rect x="8" y="356.8" width="14" height="2.6" fill="#569cd6"/><rect x="22" y="356.8" width="2" height="2.6" fill="#cccccc"/><rect x="12" y="360.8" width="24" height="2.6" fill="#569cd6"/><rect x="36" y="360.8" width="2" height="2.6" fill="#cccccc"/><rect x="40" y="360.8" width="10" height="2.6" fill="#ce9178"/><rect x="12" y="364.8" width="8" height="2.6" fill="#569cd6"/><rect x="20" y="364.8" width="2" height="2.6" fill="#cccccc"/><rect x="24" y="364.8" width="10" height="2.6" fill="#ce9178"/><rect x="12" y="368.8" width="20" height="2.6" fill="#569cd6"/><rect x="32" y="368.8" width="2" height="2.6" fill="#cccccc"/><rect x="36" y="368.8" width="8" height="2.6" fill="#ce9178"/><rect x="4" y="376.8" width="2" height="2.6" fill="#cccccc"/><rect x="8" y="376.8" width="8" height="2.6" fill="#569cd6"/><rect x="16" y="376.8" width="2" height="2.6" fill="#cccccc"/><rect x="20" y="376.8" width="58" height="2.6" fill="#ce9178"/><rect x="8" y="380.8" width="8" height="2.6" fill="#569cd6"/><rect x="16" y="380.8" width="2" height="2.6" fill="#cccccc"/><rect x="20" y="380.8" width="28" height="2.6" fill="#ce9178"/><rect x="8" y="384.8" width="14" height="2.6" fill="#569cd6"/><rect x="22" y="384.8" width="2" height="2.6" fill="#cccccc"/><rect x="12" y="388.8" width="8" height="2.6" fill="#569cd6"/><rect x="20" y="388.8" width="2" height="2.6" fill="#cccccc"/><rect x="24" y="388.8" width="14" height="2.6" fill="#ce9178"/><rect x="12" y="392.8" width="20" height="2.6" fill="#569cd6"/><rect x="32" y="392.8" width="2" height="2.6" fill="#cccccc"/><rect x="36" y="392.8" width="22" height="2.6" fill="#ce9178"/><rect x="4" y="400.8" width="2" height="2.6" fill="#cccccc"/><rect x="8" y="400.8" width="8" height="2.6" fill="#569cd6"/><rect x="16" y="400.8" width="2" height="2.6" fill="#cccccc"/><rect x="20" y="400.8" width="48" height="2.6" fill="#ce9178"/><rect x="8" y="404.8" width="8" height="2.6" fill="#569cd6"/><rect x="16" y="404.8" width="2" height="2.6" fill="#cccccc"/><rect x="20" y="404.8" width="20" height="2.6" fill="#ce9178"/><rect x="8" y="408.8" width="14" height="2.6" fill="#569cd6"/><rect x="22" y="408.8" width="2" height="2.6" fill="#cccccc"/><rect x="12" y="412.8" width="24" height="2.6" fill="#569cd6"/><rect x="36" y="412.8" width="2" height="2.6" fill="#cccccc"/><rect x="40" y="412.8" width="8" height="2.6" fill="#ce9178"/><rect x="12" y="416.8" width="8" height="2.6" fill="#569cd6"/><rect x="20" y="416.8" width="2" height="2.6" fill="#cccccc"/><rect x="24" y="416.8" width="28" height="2.6" fill="#ce9178"/><rect x="12" y="420.8" width="20" height="2.6" fill="#569cd6"/><rect x="32" y="420.8" width="2" height="2.6" fill="#cccccc"/><rect x="36" y="420.8" width="22" height="2.6" fill="#ce9178"/><rect x="4" y="428.8" width="2" height="2.6" fill="#cccccc"/><rect x="8" y="428.8" width="8" height="2.6" fill="#569cd6"/><rect x="16" y="428.8" width="2" height="2.6" fill="#cccccc"/><rect x="20" y="428.8" width="48" height="2.6" fill="#ce9178"/><rect x="8" y="432.8" width="8" height="2.6" fill="#569cd6"/><rect x="16" y="432.8" width="2" height="2.6" fill="#cccccc"/><rect x="20" y="432.8" width="18" height="2.6" fill="#ce9178"/><rect x="8" y="436.8" width="14" height="2.6" fill="#569cd6"/><rect x="22" y="436.8" width="2" height="2.6" fill="#cccccc"/><rect x="12" y="440.8" width="24" height="2.6" fill="#569cd6"/><rect x="36" y="440.8" width="2" height="2.6" fill="#cccccc"/><rect x="40" y="440.8" width="10" height="2.6" fill="#ce9178"/><rect x="12" y="444.8" width="8" height="2.6" fill="#569cd6"/><rect x="20" y="444.8" width="2" height="2.6" fill="#cccccc"/><rect x="24" y="444.8" width="20" height="2.6" fill="#ce9178"/><rect x="12" y="448.8" width="20" height="2.6" fill="#569cd6"/><rect x="32" y="448.8" width="2" height="2.6" fill="#cccccc"/><rect x="36" y="448.8" width="8" height="2.6" fill="#ce9178"/><rect x="4" y="456.8" width="2" height="2.6" fill="#cccccc"/><rect x="8" y="456.8" width="8" height="2.6" fill="#569cd6"/><rect x="16" y="456.8" width="2" height="2.6" fill="#cccccc"/><rect x="20" y="456.8" width="58" height="2.6" fill="#ce9178"/><rect x="8" y="460.8" width="8" height="2.6" fill="#569cd6"/><rect x="16" y="460.8" width="2" height="2.6" fill="#cccccc"/><rect x="20" y="460.8" width="24" height="2.6" fill="#ce9178"/><rect x="8" y="464.8" width="14" height="2.6" fill="#569cd6"/><rect x="22" y="464.8" width="2" height="2.6" fill="#cccccc"/><rect x="12" y="468.8" width="24" height="2.6" fill="#569cd6"/><rect x="36" y="468.8" width="2" height="2.6" fill="#cccccc"/><rect x="40" y="468.8" width="10" height="2.6" fill="#ce9178"/><rect x="12" y="472.8" width="8" height="2.6" fill="#569cd6"/><rect x="20" y="472.8" width="2" height="2.6" fill="#cccccc"/><rect x="24" y="472.8" width="28" height="2.6" fill="#ce9178"/><rect x="12" y="476.8" width="20" height="2.6" fill="#569cd6"/><rect x="32" y="476.8" width="2" height="2.6" fill="#cccccc"/><rect x="36" y="476.8" width="22" height="2.6" fill="#ce9178"/><rect x="4" y="484.8" width="2" height="2.6" fill="#cccccc"/><rect x="8" y="484.8" width="8" height="2.6" fill="#569cd6"/><rect x="16" y="484.8" width="2" height="2.6" fill="#cccccc"/><rect x="20" y="484.8" width="36" height="2.6" fill="#ce9178"/><rect x="8" y="488.8" width="8" height="2.6" fill="#569cd6"/><rect x="16" y="488.8" width="2" height="2.6" fill="#cccccc"/><rect x="20" y="488.8" width="8" height="2.6" fill="#ce9178"/><rect x="8" y="492.8" width="14" height="2.6" fill="#569cd6"/><rect x="22" y="492.8" width="2" height="2.6" fill="#cccccc"/><rect x="12" y="496.8" width="24" height="2.6" fill="#569cd6"/><rect x="36" y="496.8" width="2" height="2.6" fill="#cccccc"/><rect x="40" y="496.8" width="10" height="2.6" fill="#ce9178"/><rect x="12" y="500.8" width="8" height="2.6" fill="#569cd6"/><rect x="20" y="500.8" width="2" height="2.6" fill="#cccccc"/><rect x="24" y="500.8" width="24" height="2.6" fill="#ce9178"/><rect x="12" y="504.8" width="20" height="2.6" fill="#569cd6"/><rect x="32" y="504.8" width="2" height="2.6" fill="#cccccc"/><rect x="36" y="504.8" width="10" height="2.6" fill="#ce9178"/><rect x="4" y="512.8" width="2" height="2.6" fill="#cccccc"/><rect x="8" y="512.8" width="8" height="2.6" fill="#569cd6"/><rect x="16" y="512.8" width="2" height="2.6" fill="#cccccc"/><rect x="20" y="512.8" width="62" height="2.6" fill="#ce9178"/><rect x="8" y="516.8" width="8" height="2.6" fill="#569cd6"/><rect x="16" y="516.8" width="2" height="2.6" fill="#cccccc"/><rect x="20" y="516.8" width="32" height="2.6" fill="#ce9178"/><rect x="8" y="520.8" width="14" height="2.6" fill="#569cd6"/><rect x="22" y="520.8" width="2" height="2.6" fill="#cccccc"/><rect x="12" y="524.8" width="24" height="2.6" fill="#569cd6"/><rect x="36" y="524.8" width="2" height="2.6" fill="#cccccc"/><rect x="40" y="524.8" width="10" height="2.6" fill="#ce9178"/><rect x="12" y="528.8" width="8" height="2.6" fill="#569cd6"/><rect x="20" y="528.8" width="2" height="2.6" fill="#cccccc"/><rect x="24" y="528.8" width="8" height="2.6" fill="#ce9178"/><rect x="12" y="532.8" width="20" height="2.6" fill="#569cd6"/><rect x="32" y="532.8" width="2" height="2.6" fill="#cccccc"/><rect x="36" y="532.8" width="10" height="2.6" fill="#ce9178"/><rect x="4" y="540.8" width="2" height="2.6" fill="#cccccc"/><rect x="8" y="540.8" width="8" height="2.6" fill="#569cd6"/><rect x="16" y="540.8" width="2" height="2.6" fill="#cccccc"/><rect x="20" y="540.8" width="62" height="2.6" fill="#ce9178"/><rect x="8" y="544.8" width="8" height="2.6" fill="#569cd6"/><rect x="16" y="544.8" width="2" height="2.6" fill="#cccccc"/><rect x="20" y="544.8" width="32" height="2.6" fill="#ce9178"/><rect x="8" y="548.8" width="14" height="2.6" fill="#569cd6"/><rect x="22" y="548.8" width="2" height="2.6" fill="#cccccc"/><rect x="12" y="552.8" width="24" height="2.6" fill="#569cd6"/><rect x="36" y="552.8" width="2" height="2.6" fill="#cccccc"/><rect x="40" y="552.8" width="10" height="2.6" fill="#ce9178"/><rect x="12" y="556.8" width="8" height="2.6" fill="#569cd6"/><rect x="20" y="556.8" width="2" height="2.6" fill="#cccccc"/><rect x="24" y="556.8" width="32" height="2.6" fill="#ce9178"/><rect x="12" y="560.8" width="20" height="2.6" fill="#569cd6"/><rect x="32" y="560.8" width="2" height="2.6" fill="#cccccc"/><rect x="36" y="560.8" width="10" height="2.6" fill="#ce9178"/><rect x="4" y="568.8" width="2" height="2.6" fill="#cccccc"/><rect x="8" y="568.8" width="8" height="2.6" fill="#569cd6"/><rect x="16" y="568.8" width="2" height="2.6" fill="#cccccc"/><rect x="20" y="568.8" width="62" height="2.6" fill="#ce9178"/><rect x="8" y="572.8" width="8" height="2.6" fill="#569cd6"/><rect x="16" y="572.8" width="2" height="2.6" fill="#cccccc"/><rect x="20" y="572.8" width="32" height="2.6" fill="#ce9178"/><rect x="8" y="576.8" width="14" height="2.6" fill="#569cd6"/><rect x="22" y="576.8" width="2" height="2.6" fill="#cccccc"/><rect x="12" y="580.8" width="24" height="2.6" fill="#569cd6"/><rect x="36" y="580.8" width="2" height="2.6" fill="#cccccc"/><rect x="40" y="580.8" width="10" height="2.6" fill="#ce9178"/><rect x="12" y="584.8" width="8" height="2.6" fill="#569cd6"/><rect x="20" y="584.8" width="2" height="2.6" fill="#cccccc"/><rect x="24" y="584.8" width="32" height="2.6" fill="#ce9178"/><rect x="12" y="588.8" width="20" height="2.6" fill="#569cd6"/><rect x="32" y="588.8" width="2" height="2.6" fill="#cccccc"/><rect x="36" y="588.8" width="10" height="2.6" fill="#ce9178"/><rect x="4" y="596.8" width="2" height="2.6" fill="#cccccc"/><rect x="8" y="596.8" width="8" height="2.6" fill="#569cd6"/><rect x="16" y="596.8" width="2" height="2.6" fill="#cccccc"/><rect x="20" y="596.8" width="58" height="2.6" fill="#ce9178"/><rect x="8" y="600.8" width="8" height="2.6" fill="#569cd6"/><rect x="16" y="600.8" width="2" height="2.6" fill="#cccccc"/><rect x="20" y="600.8" width="28" height="2.6" fill="#ce9178"/><rect x="8" y="604.8" width="14" height="2.6" fill="#569cd6"/><rect x="22" y="604.8" width="2" height="2.6" fill="#cccccc"/><rect x="12" y="608.8" width="24" height="2.6" fill="#569cd6"/><rect x="36" y="608.8" width="2" height="2.6" fill="#cccccc"/><rect x="40" y="608.8" width="22" height="2.6" fill="#ce9178"/><rect x="12" y="612.8" width="8" height="2.6" fill="#569cd6"/><rect x="20" y="612.8" width="2" height="2.6" fill="#cccccc"/><rect x="24" y="612.8" width="32" height="2.6" fill="#ce9178"/><rect x="12" y="616.8" width="20" height="2.6" fill="#569cd6"/><rect x="32" y="616.8" width="2" height="2.6" fill="#cccccc"/><rect x="36" y="616.8" width="10" height="2.6" fill="#ce9178"/><rect x="4" y="624.8" width="2" height="2.6" fill="#cccccc"/><rect x="8" y="624.8" width="8" height="2.6" fill="#569cd6"/><rect x="16" y="624.8" width="2" height="2.6" fill="#cccccc"/><rect x="20" y="624.8" width="52" height="2.6" fill="#ce9178"/><rect x="8" y="628.8" width="8" height="2.6" fill="#569cd6"/><rect x="16" y="628.8" width="2" height="2.6" fill="#cccccc"/><rect x="20" y="628.8" width="10" height="2.6" fill="#ce9178"/><rect x="8" y="632.8" width="14" height="2.6" fill="#569cd6"/><rect x="22" y="632.8" width="2" height="2.6" fill="#cccccc"/><rect x="12" y="636.8" width="24" height="2.6" fill="#569cd6"/><rect x="36" y="636.8" width="2" height="2.6" fill="#cccccc"/><rect x="40" y="636.8" width="8" height="2.6" fill="#ce9178"/><rect x="12" y="640.8" width="20" height="2.6" fill="#569cd6"/><rect x="32" y="640.8" width="2" height="2.6" fill="#cccccc"/><rect x="16" y="644.8" width="10" height="2.6" fill="#569cd6"/><rect x="26" y="644.8" width="2" height="2.6" fill="#cccccc"/><rect x="30" y="644.8" width="4" height="2.6" fill="#b5cea8"/><rect x="12" y="648.8" width="8" height="2.6" fill="#569cd6"/><rect x="20" y="648.8" width="2" height="2.6" fill="#cccccc"/><rect x="24" y="648.8" width="28" height="2.6" fill="#ce9178"/><rect x="12" y="652.8" width="2" height="2.6" fill="#6a9955"/><rect x="16" y="652.8" width="30" height="2.6" fill="#6a9955"/><rect x="48" y="652.8" width="20" height="2.6" fill="#6a9955"/><rect x="70" y="652.8" width="6" height="2.6" fill="#6a9955"/><rect x="78" y="652.8" width="10" height="2.6" fill="#6a9955"/><rect x="90" y="652.8" width="4" height="2.6" fill="#6a9955"/><rect x="96" y="652.8" width="10" height="2.6" fill="#6a9955"/><rect x="108" y="652.8" width="2" height="2.6" fill="#6a9955"/><rect x="112" y="652.8" width="12" height="2.6" fill="#6a9955"/><rect x="126" y="652.8" width="8" height="2.6" fill="#6a9955"/><rect x="136" y="652.8" width="8" height="2.6" fill="#6a9955"/><rect x="12" y="656.8" width="2" height="2.6" fill="#6a9955"/><rect x="16" y="656.8" width="10" height="2.6" fill="#6a9955"/><rect x="28" y="656.8" width="66" height="2.6" fill="#6a9955"/><rect x="12" y="660.8" width="2" height="2.6" fill="#6a9955"/><rect x="16" y="660.8" width="26" height="2.6" fill="#6a9955"/><rect x="44" y="660.8" width="14" height="2.6" fill="#6a9955"/><rect x="12" y="664.8" width="2" height="2.6" fill="#6a9955"/><rect x="16" y="664.8" width="10" height="2.6" fill="#6a9955"/><rect x="28" y="664.8" width="14" height="2.6" fill="#6a9955"/><rect x="12" y="668.8" width="2" height="2.6" fill="#6a9955"/><rect x="16" y="668.8" width="6" height="2.6" fill="#6a9955"/><rect x="24" y="668.8" width="62" height="2.6" fill="#6a9955"/><rect x="12" y="672.8" width="2" height="2.6" fill="#6a9955"/><rect x="16" y="672.8" width="22" height="2.6" fill="#6a9955"/><rect x="40" y="672.8" width="34" height="2.6" fill="#6a9955"/><rect x="4" y="680.8" width="2" height="2.6" fill="#cccccc"/><rect x="8" y="680.8" width="8" height="2.6" fill="#569cd6"/><rect x="16" y="680.8" width="2" height="2.6" fill="#cccccc"/><rect x="20" y="680.8" width="56" height="2.6" fill="#ce9178"/><rect x="8" y="684.8" width="8" height="2.6" fill="#569cd6"/><rect x="16" y="684.8" width="2" height="2.6" fill="#cccccc"/><rect x="20" y="684.8" width="18" height="2.6" fill="#ce9178"/><rect x="8" y="688.8" width="14" height="2.6" fill="#569cd6"/><rect x="22" y="688.8" width="2" height="2.6" fill="#cccccc"/><rect x="12" y="692.8" width="20" height="2.6" fill="#569cd6"/><rect x="32" y="692.8" width="2" height="2.6" fill="#cccccc"/><rect x="16" y="696.8" width="10" height="2.6" fill="#569cd6"/><rect x="26" y="696.8" width="2" height="2.6" fill="#cccccc"/><rect x="30" y="696.8" width="6" height="2.6" fill="#b5cea8"/><rect x="12" y="700.8" width="8" height="2.6" fill="#569cd6"/><rect x="20" y="700.8" width="2" height="2.6" fill="#cccccc"/><rect x="24" y="700.8" width="10" height="2.6" fill="#ce9178"/><rect x="12" y="704.8" width="2" height="2.6" fill="#6a9955"/><rect x="16" y="704.8" width="30" height="2.6" fill="#6a9955"/><rect x="48" y="704.8" width="20" height="2.6" fill="#6a9955"/><rect x="70" y="704.8" width="6" height="2.6" fill="#6a9955"/><rect x="78" y="704.8" width="18" height="2.6" fill="#6a9955"/><rect x="98" y="704.8" width="4" height="2.6" fill="#6a9955"/><rect x="104" y="704.8" width="6" height="2.6" fill="#6a9955"/><rect x="112" y="704.8" width="16" height="2.6" fill="#6a9955"/><rect x="130" y="704.8" width="8" height="2.6" fill="#6a9955"/><rect x="12" y="708.8" width="4" height="2.6" fill="#569cd6"/><rect x="16" y="708.8" width="2" height="2.6" fill="#cccccc"/><rect x="20" y="708.8" width="76" height="2.6" fill="#ce9178"/><rect x="12" y="712.8" width="20" height="2.6" fill="#569cd6"/><rect x="32" y="712.8" width="2" height="2.6" fill="#cccccc"/><rect x="36" y="712.8" width="14" height="2.6" fill="#ce9178"/><rect x="4" y="720.8" width="2" height="2.6" fill="#cccccc"/><rect x="8" y="720.8" width="8" height="2.6" fill="#569cd6"/><rect x="16" y="720.8" width="2" height="2.6" fill="#cccccc"/><rect x="20" y="720.8" width="56" height="2.6" fill="#ce9178"/><rect x="8" y="724.8" width="8" height="2.6" fill="#569cd6"/><rect x="16" y="724.8" width="2" height="2.6" fill="#cccccc"/><rect x="20" y="724.8" width="18" height="2.6" fill="#ce9178"/><rect x="8" y="728.8" width="14" height="2.6" fill="#569cd6"/><rect x="22" y="728.8" width="2" height="2.6" fill="#cccccc"/><rect x="12" y="732.8" width="20" height="2.6" fill="#569cd6"/><rect x="32" y="732.8" width="2" height="2.6" fill="#cccccc"/><rect x="16" y="736.8" width="10" height="2.6" fill="#569cd6"/><rect x="26" y="736.8" width="2" height="2.6" fill="#cccccc"/><rect x="30" y="736.8" width="6" height="2.6" fill="#b5cea8"/><rect x="12" y="740.8" width="8" height="2.6" fill="#569cd6"/><rect x="20" y="740.8" width="2" height="2.6" fill="#cccccc"/><rect x="24" y="740.8" width="10" height="2.6" fill="#ce9178"/><rect x="12" y="744.8" width="4" height="2.6" fill="#569cd6"/><rect x="16" y="744.8" width="2" height="2.6" fill="#cccccc"/><rect x="20" y="744.8" width="76" height="2.6" fill="#ce9178"/><rect x="12" y="748.8" width="20" height="2.6" fill="#569cd6"/><rect x="32" y="748.8" width="2" height="2.6" fill="#cccccc"/><rect x="36" y="748.8" width="14" height="2.6" fill="#ce9178"/><rect x="4" y="756.8" width="2" height="2.6" fill="#cccccc"/><rect x="8" y="756.8" width="8" height="2.6" fill="#569cd6"/><rect x="16" y="756.8" width="2" height="2.6" fill="#cccccc"/><rect x="20" y="756.8" width="56" height="2.6" fill="#ce9178"/><rect x="8" y="760.8" width="8" height="2.6" fill="#569cd6"/><rect x="16" y="760.8" width="2" height="2.6" fill="#cccccc"/><rect x="20" y="760.8" width="18" height="2.6" fill="#ce9178"/><rect x="8" y="764.8" width="14" height="2.6" fill="#569cd6"/><rect x="22" y="764.8" width="2" height="2.6" fill="#cccccc"/><rect x="12" y="768.8" width="20" height="2.6" fill="#569cd6"/><rect x="32" y="768.8" width="2" height="2.6" fill="#cccccc"/><rect x="16" y="772.8" width="10" height="2.6" fill="#569cd6"/><rect x="26" y="772.8" width="2" height="2.6" fill="#cccccc"/><rect x="30" y="772.8" width="6" height="2.6" fill="#b5cea8"/><rect x="12" y="776.8" width="8" height="2.6" fill="#569cd6"/><rect x="20" y="776.8" width="2" height="2.6" fill="#cccccc"/><rect x="24" y="776.8" width="10" height="2.6" fill="#ce9178"/><rect x="12" y="780.8" width="4" height="2.6" fill="#569cd6"/><rect x="16" y="780.8" width="2" height="2.6" fill="#cccccc"/><rect x="20" y="780.8" width="76" height="2.6" fill="#ce9178"/><rect x="12" y="784.8" width="20" height="2.6" fill="#569cd6"/><rect x="32" y="784.8" width="2" height="2.6" fill="#cccccc"/><rect x="36" y="784.8" width="14" height="2.6" fill="#ce9178"/><rect x="4" y="792.8" width="2" height="2.6" fill="#cccccc"/><rect x="8" y="792.8" width="8" height="2.6" fill="#569cd6"/><rect x="16" y="792.8" width="2" height="2.6" fill="#cccccc"/><rect x="20" y="792.8" width="56" height="2.6" fill="#ce9178"/><rect x="8" y="796.8" width="8" height="2.6" fill="#569cd6"/><rect x="16" y="796.8" width="2" height="2.6" fill="#cccccc"/><rect x="20" y="796.8" width="18" height="2.6" fill="#ce9178"/><rect x="8" y="800.8" width="14" height="2.6" fill="#569cd6"/><rect x="22" y="800.8" width="2" height="2.6" fill="#cccccc"/><rect x="12" y="804.8" width="20" height="2.6" fill="#569cd6"/><rect x="32" y="804.8" width="2" height="2.6" fill="#cccccc"/><rect x="16" y="808.8" width="10" height="2.6" fill="#569cd6"/><rect x="26" y="808.8" width="2" height="2.6" fill="#cccccc"/><rect x="30" y="808.8" width="6" height="2.6" fill="#b5cea8"/><rect x="12" y="812.8" width="8" height="2.6" fill="#569cd6"/><rect x="20" y="812.8" width="2" height="2.6" fill="#cccccc"/><rect x="24" y="812.8" width="10" height="2.6" fill="#ce9178"/><rect x="12" y="816.8" width="4" height="2.6" fill="#569cd6"/><rect x="16" y="816.8" width="2" height="2.6" fill="#cccccc"/><rect x="20" y="816.8" width="76" height="2.6" fill="#ce9178"/><rect x="12" y="820.8" width="20" height="2.6" fill="#569cd6"/><rect x="32" y="820.8" width="2" height="2.6" fill="#cccccc"/><rect x="36" y="820.8" width="14" height="2.6" fill="#ce9178"/><rect x="4" y="828.8" width="2" height="2.6" fill="#cccccc"/><rect x="8" y="828.8" width="8" height="2.6" fill="#569cd6"/><rect x="16" y="828.8" width="2" height="2.6" fill="#cccccc"/><rect x="20" y="828.8" width="62" height="2.6" fill="#ce9178"/><rect x="8" y="832.8" width="8" height="2.6" fill="#569cd6"/><rect x="16" y="832.8" width="2" height="2.6" fill="#cccccc"/><rect x="20" y="832.8" width="34" height="2.6" fill="#ce9178"/><rect x="8" y="836.8" width="14" height="2.6" fill="#569cd6"/><rect x="22" y="836.8" width="2" height="2.6" fill="#cccccc"/><rect x="12" y="840.8" width="24" height="2.6" fill="#569cd6"/><rect x="36" y="840.8" width="2" height="2.6" fill="#cccccc"/><rect x="40" y="840.8" width="10" height="2.6" fill="#ce9178"/><rect x="12" y="844.8" width="8" height="2.6" fill="#569cd6"/><rect x="20" y="844.8" width="2" height="2.6" fill="#cccccc"/><rect x="24" y="844.8" width="28" height="2.6" fill="#ce9178"/><rect x="12" y="848.8" width="20" height="2.6" fill="#569cd6"/><rect x="32" y="848.8" width="2" height="2.6" fill="#cccccc"/><rect x="36" y="848.8" width="22" height="2.6" fill="#ce9178"/><rect x="4" y="856.8" width="2" height="2.6" fill="#cccccc"/><rect x="8" y="856.8" width="8" height="2.6" fill="#569cd6"/><rect x="16" y="856.8" width="2" height="2.6" fill="#cccccc"/><rect x="20" y="856.8" width="46" height="2.6" fill="#ce9178"/><rect x="8" y="860.8" width="8" height="2.6" fill="#569cd6"/><rect x="16" y="860.8" width="2" height="2.6" fill="#cccccc"/><rect x="20" y="860.8" width="38" height="2.6" fill="#ce9178"/><rect x="8" y="864.8" width="14" height="2.6" fill="#569cd6"/><rect x="22" y="864.8" width="2" height="2.6" fill="#cccccc"/><rect x="12" y="868.8" width="24" height="2.6" fill="#569cd6"/><rect x="36" y="868.8" width="2" height="2.6" fill="#cccccc"/><rect x="40" y="868.8" width="8" height="2.6" fill="#ce9178"/><rect x="12" y="872.8" width="8" height="2.6" fill="#569cd6"/><rect x="20" y="872.8" width="2" height="2.6" fill="#cccccc"/><rect x="24" y="872.8" width="34" height="2.6" fill="#ce9178"/><rect x="12" y="876.8" width="20" height="2.6" fill="#569cd6"/><rect x="32" y="876.8" width="2" height="2.6" fill="#cccccc"/><rect x="36" y="876.8" width="10" height="2.6" fill="#ce9178"/></g></svg>
<div class="r" style="left:2010px;top:112px;width:156px;height:4px;background:rgba(90,90,90,0.7);"></div>
<div class="r" style="left:2166px;top:112px;width:2px;height:1506px;background:#2b2b2b;"></div>
<div class="r" style="left:2168px;top:112px;width:26px;height:239px;background:rgba(121,121,121,0.4);"></div>
<div class="r" style="left:2176px;top:112px;width:10px;height:12px;background:#a0a0a0;"></div>
<div class="r" style="left:2194px;top:0px;width:2px;height:1618px;background:#2b2b2b;"></div>
<div class="r" style="left:2196px;top:0px;width:1388px;height:1618px;background:#1f1f1f;"></div>
<div class="r" style="left:2196px;top:0px;width:1388px;height:66px;background:#181818;"></div>
<div class="r" style="left:2196px;top:66px;width:1388px;height:2px;background:#2b2b2b;"></div>
<div class="r" style="left:2196px;top:0px;width:324px;height:68px;background:#1f1f1f;"></div>
<div class="r" style="left:2519px;top:0px;width:2px;height:66px;background:#2b2b2b;"></div>
<svg style="left:2228px;top:23px;" width="20" height="20" viewBox="0 0 20 20"><g stroke="#ffffff" stroke-width="2.4"><path d="M1 2 H18 M1 8 H12 M1 14 H18 M1 20 H12"/></g></svg>
<div class="a" style="left:2258.5px;top:34.4px;font-family:'Liberation Sans';font-size:26px;color:#ffffff;font-weight:400;letter-spacing:0px;">OCP CAD Viewer</div>
<svg style="left:2482px;top:24px;" width="20" height="20" viewBox="0 0 20 20"><path d="M2 2 L18 18 M18 2 L2 18" stroke="#ffffff" stroke-width="2.2"/></svg>
<svg style="left:3420px;top:18px;" width="32" height="30" viewBox="0 0 32 30"><g fill="none" stroke="#cccccc" stroke-width="2.2"><path d="M14 3 H4 a2 2 0 0 0 -2 2 V25 a2 2 0 0 0 2 2 H14 Z M14 3 H28 V15"/><circle cx="22" cy="21" r="4"/><path d="M19 24 L15 28"/></g></svg>
<svg style="left:3472px;top:18px;" width="30" height="30" viewBox="0 0 30 30"><g fill="none" stroke="#cccccc" stroke-width="2.2"><rect x="2" y="3" width="26" height="24" rx="2"/><path d="M15 3 V27"/></g></svg>
<svg style="left:3523px;top:30px;" width="34" height="8" viewBox="0 0 34 8"><g fill="#cccccc"><circle cx="6" cy="3.5" r="2.3"/><circle cx="16" cy="3.5" r="2.3"/><circle cx="26" cy="3.5" r="2.3"/></g></svg>
<div class="r" style="left:2242px;top:76px;width:1342px;height:1512px;background:#444444;"></div>
<div class="r" style="left:2246px;top:80px;width:1400px;height:76px;border:2.5px solid #d0d0d0;border-radius:13px"></div>
<svg style="left:2268px;top:92px;" width="36" height="50" viewBox="0 0 36 50"><g stroke-width="4" stroke-linecap="round"><path d="M5 4 V43" stroke="#3a9af0"/><path d="M5 43 L30 30" stroke="#33cc33"/><path d="M5 43 L30 56" stroke="#ff4400"/></g></svg>
<div class="r" style="left:2323px;top:87px;width:62px;height:62px;border:2.5px solid #3a8ee6;border-radius:12px;background:#5a5a5a"></div>
<svg style="left:2330px;top:92px;" width="50" height="56" viewBox="0 0 50 56"><g stroke-width="4" stroke-linecap="round"><path d="M12 4 V22" stroke="#3a9af0"/><path d="M20 28 L35 20" stroke="#33cc33"/><path d="M20 38 L35 46" stroke="#ff4400"/></g><circle cx="12" cy="33" r="8" fill="#2e2e2e"/><text x="6.5" y="39.5" font-family="Liberation Sans" font-size="17" fill="#dddddd">0</text></svg>
<svg style="left:2398px;top:94px;" width="48" height="48" viewBox="0 0 48 48"><g fill="none" stroke="#e0e0e0" stroke-width="3"><rect x="2" y="2" width="44" height="44" rx="2"/><path d="M16.5 2 V46 M31.5 2 V46 M2 16.5 H46 M2 31.5 H46"/></g></svg>
<div class="r" style="left:2466px;top:95px;width:3px;height:48px;background:#d0d0d0;"></div>
<svg style="left:2486px;top:92px;" width="52" height="52" viewBox="0 0 52 52"><g fill="none" stroke="#3a8ee6" stroke-width="2"><rect x="27.6" y="3.2" width="21.4" height="20.8"/><path d="M4 14.4 L27.6 3.2 M4 45.6 L49 3.2 M37.2 45.6 L49 24"/></g><rect x="4.5" y="16.5" width="31" height="30.5" rx="1.5" fill="none" stroke="#e0e0e0" stroke-width="3.6"/></svg>
<svg style="left:2555px;top:93px;" width="50" height="50" viewBox="0 0 50 50"><path d="M2.5 15 L15.3 3 H47.3 V35 L35.3 47 H2.5 Z" fill="#3a7dbf"/><path d="M15.3 3 V35 H47.3 M15.3 35 L2.5 47" fill="none" stroke="#7fb6ea" stroke-width="1.6"/><path d="M2.5 15 L15.3 3 H47.3 V35 L35.3 47 H2.5 Z M2.5 15 H35.3 V47 M35.3 15 L47.3 3" fill="none" stroke="#e0e0e0" stroke-width="2.4" stroke-linejoin="round"/></svg>
<svg style="left:2624px;top:93px;" width="50" height="50" viewBox="0 0 50 50"><g fill="none" stroke="#3a8ee6" stroke-width="3.6" stroke-linejoin="round"><path d="M2.3 15 L13.5 3 H45.4 V35 L35 47 H2.3 Z"/><path d="M13.5 3 V35 H45.4 M13.5 35 L2.3 47"/><path d="M2.3 15 H35 V47 M35 15 L45.4 3"/></g></svg>
<div class="r" style="left:2692px;top:95px;width:3px;height:48px;background:#d0d0d0;"></div>
<svg style="left:2714px;top:92px;" width="54" height="54" viewBox="0 0 54 54"><g fill="none" stroke="#e0e0e0" stroke-width="3"><path d="M34.5 7 A21.5 21.5 0 1 0 45.7 29"/><path d="M31 14.5 A13.5 13.5 0 1 0 38.5 28"/><path d="M30.6 26.4 L40.2 16.8 L49.8 26.4"/></g></svg>
<svg style="left:2781px;top:93px;" width="50" height="50" viewBox="0 0 50 50"><g fill="none" stroke="#e0e0e0" stroke-width="3"><rect x="2" y="2" width="45" height="45"/><path d="M10 10 L19 19 M10 10 H18 M10 10 V18 M39 10 L30 19 M39 10 H31 M39 10 V18 M10 39 L19 30 M10 39 H18 M10 39 V31 M39 39 L30 30 M39 39 H31 M39 39 V31"/></g></svg>
<div class="r" style="left:2850px;top:95px;width:3px;height:48px;background:#d0d0d0;"></div>
<svg style="left:2874px;top:94px;" width="44" height="48" viewBox="0 0 44 48"><path d="M22 2 L41 12.5 V35.5 L22 46 L3 35.5 V12.5 Z" fill="#3a8ee6" stroke="#e0e0e0" stroke-width="2.4" stroke-linejoin="round"/><path d="M3 12.5 L22 23 L41 12.5 M22 23 V46" fill="none" stroke="#e0e0e0" stroke-width="2.4"/></svg>
<svg style="left:2939px;top:93px;" width="50" height="50" viewBox="0 0 50 50"><path d="M2 14 H35 V47 H2 Z" fill="#3a8ee6"/><g fill="none" stroke="#e0e0e0" stroke-width="2.6" stroke-linejoin="round"><path d="M2 14 L14 2 H47 V35 L35 47 H2 Z M2 14 H35 V47 M35 14 L47 2"/></g></svg>
<svg style="left:3007px;top:93px;" width="50" height="50" viewBox="0 0 50 50"><path d="M14 2 H47 V35 H14 Z" fill="#3a8ee6"/><g fill="none" stroke="#e0e0e0" stroke-width="2.6" stroke-linejoin="round"><path d="M2 14 L14 2 H47 V35 L35 47 H2 Z M2 14 H35 V47 M35 14 L47 2"/><path d="M14 2 V35 H47 M14 35 L2 47" stroke-width="2"/></g></svg>
<svg style="left:3075px;top:93px;" width="50" height="50" viewBox="0 0 50 50"><path d="M2 14 L14 2 H47 L35 14 Z" fill="#3a8ee6"/><g fill="none" stroke="#e0e0e0" stroke-width="2.6" stroke-linejoin="round"><path d="M2 14 L14 2 H47 V35 L35 47 H2 Z M2 14 H35 V47 M35 14 L47 2"/><path d="M14 2 V35 H47 M14 35 L2 47" stroke-width="2"/></g></svg>
<svg style="left:3143px;top:93px;" width="50" height="50" viewBox="0 0 50 50"><path d="M2 47 L14 35 H47 L35 47 Z" fill="#3a8ee6"/><g fill="none" stroke="#e0e0e0" stroke-width="2.6" stroke-linejoin="round"><path d="M2 14 L14 2 H47 V35 L35 47 H2 Z M2 14 H35 V47 M35 14 L47 2"/><path d="M14 2 V35 H47 M14 35 L2 47" stroke-width="2"/></g></svg>
<svg style="left:3211px;top:93px;" width="50" height="50" viewBox="0 0 50 50"><path d="M2 14 L14 2 V35 L2 47 Z" fill="#3a8ee6"/><g fill="none" stroke="#e0e0e0" stroke-width="2.6" stroke-linejoin="round"><path d="M2 14 L14 2 H47 V35 L35 47 H2 Z M2 14 H35 V47 M35 14 L47 2"/><path d="M14 2 V35 H47 M14 35 L2 47" stroke-width="2"/></g></svg>
<svg style="left:3279px;top:93px;" width="50" height="50" viewBox="0 0 50 50"><path d="M35 14 L47 2 V35 L35 47 Z" fill="#3a8ee6"/><g fill="none" stroke="#e0e0e0" stroke-width="2.6" stroke-linejoin="round"><path d="M2 14 L14 2 H47 V35 L35 47 H2 Z M2 14 H35 V47 M35 14 L47 2"/><path d="M14 2 V35 H47 M14 35 L2 47" stroke-width="2"/></g></svg>
<div class="r" style="left:3348px;top:95px;width:3px;height:48px;background:#d0d0d0;"></div>
<svg style="left:3368px;top:92px;" width="54" height="54" viewBox="0 0 54 54"><g stroke="#3a8ee6" stroke-width="2.6"><path d="M26.3 26.2 L10 14.7 M26.3 26.2 L32 7.7 M26.3 26.2 L44.9 26.2 M26.3 26.2 L10 36.7 M26.3 26.2 L32 43.6"/></g><g fill="#3a8ee6"><circle cx="10" cy="14.7" r="6.3"/><circle cx="32" cy="7.7" r="6.3"/><circle cx="44.9" cy="26.2" r="6.3"/><circle cx="10" cy="36.7" r="6.3"/><circle cx="32" cy="43.6" r="6.3"/></g><circle cx="26.3" cy="26.2" r="7.5" fill="#dddddd"/></svg>
<div class="a" style="left:2299px;top:191.2px;font-family:'Liberation Sans';font-size:28px;color:#e8e8e8;font-weight:700;letter-spacing:0px;">Tree</div>
<div class="r" style="left:2406px;top:168px;width:3px;height:47px;background:#d8d8d8;"></div>
<div class="r" style="left:2406px;top:213px;width:316px;height:3px;background:#d8d8d8;"></div>
<div class="r" style="left:2565px;top:168px;width:3px;height:47px;background:#d8d8d8;"></div>
<div class="a" style="left:2437px;top:191.2px;font-family:'Liberation Sans';font-size:28px;color:#e8e8e8;font-weight:400;letter-spacing:0px;">Clipping</div>
<div class="a" style="left:2594px;top:191.2px;font-family:'Liberation Sans';font-size:28px;color:#e8e8e8;font-weight:400;letter-spacing:0px;">Material</div>
<div class="a" style="left:2597px;top:232.3px;font-family:'Liberation Sans';font-size:22px;color:#e0e0e0;font-weight:400;letter-spacing:0px;">1</div>
<div class="a" style="left:2630px;top:232.3px;font-family:'Liberation Sans';font-size:22px;color:#e0e0e0;font-weight:400;letter-spacing:0px;">R</div>
<div class="a" style="left:2665px;top:232.3px;font-family:'Liberation Sans';font-size:22px;color:#e0e0e0;font-weight:400;letter-spacing:0px;">C</div>
<div class="a" style="left:2700px;top:232.3px;font-family:'Liberation Sans';font-size:22px;color:#e0e0e0;font-weight:400;letter-spacing:0px;">E</div>
<svg style="left:2259px;top:263px;" width="21" height="21" viewBox="0 0 21 21"><path d="M0 0 H21 L10.5 18.900000000000002 Z" fill="#e8e8e8"/></svg>
<svg style="left:2288px;top:259px;" width="42" height="26" viewBox="0 0 42 26"><path d="M2 13 C10 1 32 1 40 13 C32 25 10 25 2 13 Z" fill="none" stroke="#e0e0e0" stroke-width="2"/><circle cx="20" cy="13" r="9.5" fill="#3a8ee6"/><circle cx="20" cy="13" r="5.2" fill="#e0e0e0"/></svg>
<svg style="left:2339px;top:259px;" width="48" height="28" viewBox="0 0 48 28"><path d="M10 1.5 H45 L37 14 L45 26.5 H10 L2 14 Z" fill="#3a8ee6" stroke="#e0e0e0" stroke-width="2" stroke-linejoin="round"/><path d="M6 9.5 H41 M6 18.5 H41 M27 1.5 L19 14 L27 26.5" fill="none" stroke="#e0e0e0" stroke-width="2.2"/></svg>
<div class="a" style="left:2403px;top:271.7px;font-family:'Liberation Sans';font-size:28px;color:#e8e8e8;font-weight:400;letter-spacing:0px;">Group</div>
<svg style="left:2319px;top:297px;" width="42" height="26" viewBox="0 0 42 26"><path d="M2 13 C10 1 32 1 40 13 C32 25 10 25 2 13 Z" fill="none" stroke="#e0e0e0" stroke-width="2"/><circle cx="20" cy="13" r="9.5" fill="#3a8ee6"/><circle cx="20" cy="13" r="5.2" fill="#e0e0e0"/></svg>
<svg style="left:2370px;top:297px;" width="48" height="28" viewBox="0 0 48 28"><path d="M10 1.5 H45 L37 14 L45 26.5 H10 L2 14 Z" fill="#3a8ee6" stroke="#e0e0e0" stroke-width="2" stroke-linejoin="round"/><path d="M6 9.5 H41 M6 18.5 H41 M27 1.5 L19 14 L27 26.5" fill="none" stroke="#e0e0e0" stroke-width="2.2"/></svg>
<div class="a" style="left:2434px;top:310.2px;font-family:'Liberation Sans';font-size:28px;color:#e8e8e8;font-weight:400;letter-spacing:0px;">Solids</div>
<svg style="left:2260px;top:347px;" width="15" height="15" viewBox="0 0 15 15"><path d="M0 0 H15 L7.5 13.5 Z" fill="#e8e8e8"/></svg>
<div class="a" style="left:2291px;top:357.3px;font-family:'Liberation Mono';font-size:22px;color:#e8e8e8;font-weight:700;letter-spacing:0px;">i</div>
<svg style="left:2225px;top:1435px;" width="110" height="130" viewBox="0 0 110 130"><g stroke-linecap="round"><path d="M60.5 69 L33 29" stroke="#6ddb73" stroke-width="4.5"/><path d="M28 22 L42 31 L33 36 Z" fill="#6ddb73" stroke="#6ddb73" stroke-width="2"/><path d="M60.5 69 L85 69" stroke="#78c8f8" stroke-width="4.5"/><circle cx="85" cy="69" r="6" fill="#78c8f8"/><path d="M60.5 69 L28 96" stroke="#ff8c00" stroke-width="5"/><path d="M20.5 106 L25 90 L35 100 Z" fill="#ff8c00" stroke="#ff8c00" stroke-width="2"/><circle cx="60.5" cy="69" r="7.5" fill="#a0a0a0"/></g><text x="21" y="21" font-family="Liberation Sans" font-size="18" fill="#f0f0f0">Y</text><text x="89" y="77" font-family="Liberation Sans" font-size="18" fill="#f0f0f0">Z</text><text x="5" y="122" font-family="Liberation Sans" font-size="18" fill="#f0f0f0">X</text></svg>
<svg style="left:0;top:0" width="3584" height="2126" viewBox="0 0 3584 2126"><g stroke-linejoin="round"><defs><linearGradient id="cyl" x1="0" y1="1" x2="1" y2="0"><stop offset="0" stop-color="#efb32a"/><stop offset="0.45" stop-color="#ffdc48"/><stop offset="1" stop-color="#f1b42b"/></linearGradient><linearGradient id="hole" x1="0" y1="0" x2="1" y2="0"><stop offset="0" stop-color="#f0b62c"/><stop offset="0.6" stop-color="#ffd943"/><stop offset="1" stop-color="#f5c034"/></linearGradient></defs><polygon points="2529.0,985.0 2600.0,878.0 2633.0,760.0 2650.0,738.0 2665.0,722.0 2645.5,690.0 2652.0,676.0 2698.0,657.0 2717.0,685.0 2790.0,655.0 2813.0,650.0 2843.0,690.0 3150.0,560.0 3166.0,574.0 3155.0,597.0 3164.0,600.0 3192.0,640.0 3187.0,648.0 3230.0,675.0 3258.0,716.0 3270.0,757.0 3269.0,780.0 3276.0,791.0 3292.0,812.0 3320.0,819.0 3347.0,858.0 3340.0,876.0 3377.0,876.0 3386.0,890.0 3242.0,1114.0 2757.0,1314.0" fill="#fdc832" stroke="#6c6f76" stroke-width="1.6"/><path d="M2633 760 Q2648 708 2700 681 Q2760 654 2814 651 L2843.5 690 L2678 764 L2672 770 Z" fill="url(#cyl)" stroke="#6c6f76" stroke-width="1.5"/><path d="M2649 741 L2671 770" stroke="#6c6f76" stroke-width="1.3" fill="none"/><path d="M2645.5 690 Q2660 660 2698 657 L2717 687 L2665 722 Z" fill="#f9c632" stroke="#6c6f76" stroke-width="1.5"/><path d="M2672 671 L2694.6 702.3" stroke="#6c6f76" stroke-width="1.5"/><ellipse cx="2622.0" cy="818.0" rx="15" ry="26" transform="rotate(32 2622.0 818.0)" fill="#f2b82c" stroke="#6c6f76" stroke-width="1.3" /><ellipse cx="2640.0" cy="790.0" rx="12" ry="20" transform="rotate(32 2640.0 790.0)" fill="#f7c232" stroke="#6c6f76" stroke-width="1.3" /><polygon points="2678.0,764.0 3150.0,560.0 3166.0,574.0 2688.0,781.0" fill="#fdc832" stroke="#6c6f76" stroke-width="1.5"/><polygon points="2882.0,702.0 3166.0,574.0 3155.0,597.0 3164.0,600.0 3192.0,640.0 3187.0,648.0 3230.0,675.0 3258.0,716.0 3270.0,757.0 3269.0,780.0 3276.0,791.0 3292.0,812.0 3320.0,819.0 3347.0,858.0 3340.0,876.0 3377.0,876.0 2896.0,1077.0 3010.0,905.0 2940.0,825.0" fill="#fdc832" stroke="#6c6f76" stroke-width="1.2"/><polygon points="2927.0,681.0 3094.0,608.5 3089.0,633.0 2948.5,689.4" fill="#dba52a" stroke="#6c6f76" stroke-width="1.2"/><polygon points="2548.0,989.0 2687.0,780.0 2882.0,702.0 2847.0,753.0 2903.0,782.0 2950.0,823.0 2940.0,826.0" fill="#d4a027" stroke="#6c6f76" stroke-width="1.5"/><polygon points="2529.0,985.0 2678.0,764.0 2687.0,780.0 2548.0,989.0" fill="#ebb42c" stroke="#6c6f76" stroke-width="1.2"/><ellipse cx="2619.0" cy="943.0" rx="14" ry="6.5" transform="rotate(-30 2619.0 943.0)" fill="url(#hole)" stroke="#6c6f76" stroke-width="1.1" /><ellipse cx="2643.0" cy="905.0" rx="14" ry="6.5" transform="rotate(-30 2643.0 905.0)" fill="url(#hole)" stroke="#6c6f76" stroke-width="1.1" /><ellipse cx="2672.0" cy="920.0" rx="14" ry="6.5" transform="rotate(-30 2672.0 920.0)" fill="url(#hole)" stroke="#6c6f76" stroke-width="1.1" /><ellipse cx="2694.0" cy="829.0" rx="14" ry="6.5" transform="rotate(-30 2694.0 829.0)" fill="url(#hole)" stroke="#6c6f76" stroke-width="1.1" /><ellipse cx="2695.0" cy="857.0" rx="14" ry="6.5" transform="rotate(-30 2695.0 857.0)" fill="url(#hole)" stroke="#6c6f76" stroke-width="1.1" /><ellipse cx="2694.0" cy="885.0" rx="14" ry="6.5" transform="rotate(-30 2694.0 885.0)" fill="url(#hole)" stroke="#6c6f76" stroke-width="1.1" /><ellipse cx="2718.0" cy="794.0" rx="14" ry="6.5" transform="rotate(-30 2718.0 794.0)" fill="url(#hole)" stroke="#6c6f76" stroke-width="1.1" /><ellipse cx="2745.0" cy="807.0" rx="14" ry="6.5" transform="rotate(-30 2745.0 807.0)" fill="url(#hole)" stroke="#6c6f76" stroke-width="1.1" /><ellipse cx="2770.0" cy="772.0" rx="14" ry="6.5" transform="rotate(-30 2770.0 772.0)" fill="url(#hole)" stroke="#6c6f76" stroke-width="1.1" /><ellipse cx="2813.0" cy="766.0" rx="20" ry="6.5" transform="rotate(-30 2813.0 766.0)" fill="url(#hole)" stroke="#6c6f76" stroke-width="1.1" /><ellipse cx="2724.0" cy="894.0" rx="15" ry="6.5" transform="rotate(-30 2724.0 894.0)" fill="url(#hole)" stroke="#6c6f76" stroke-width="1.1" /><ellipse cx="2852.0" cy="817.0" rx="13" ry="6.5" transform="rotate(-30 2852.0 817.0)" fill="url(#hole)" stroke="#6c6f76" stroke-width="1.1" /><ellipse cx="2838.0" cy="847.0" rx="13" ry="6.5" transform="rotate(-30 2838.0 847.0)" fill="url(#hole)" stroke="#6c6f76" stroke-width="1.1" /><ellipse cx="2770.0" cy="880.0" rx="12" ry="6.5" transform="rotate(-30 2770.0 880.0)" fill="url(#hole)" stroke="#6c6f76" stroke-width="1.1" /><polygon points="2548.0,989.0 2940.0,826.0 3010.0,905.0 2896.0,1077.0 2754.0,1286.0" fill="#fdc832" stroke="#6c6f76" stroke-width="1.2"/><polygon points="2529.0,985.0 2548.0,989.0 2754.0,1286.0 2757.0,1314.0" fill="#e9b22b" stroke="#6c6f76" stroke-width="1.2"/><ellipse cx="2627.0" cy="1006.0" rx="16.5" ry="15" transform="rotate(0 2627.0 1006.0)" fill="#e9b12b" stroke="#6c6f76" stroke-width="1.2" /><path d="M2611.0 1007.0 C2615.0 1000.0 2633.0 1002.0 2637.0 1018.0 C2627.0 1022.0 2613.0 1016.0 2611.0 1007.0 Z" fill="#404040"/><ellipse cx="2682.0" cy="984.0" rx="16.5" ry="15" transform="rotate(0 2682.0 984.0)" fill="#e9b12b" stroke="#6c6f76" stroke-width="1.2" /><path d="M2666.0 985.0 C2670.0 978.0 2688.0 980.0 2692.0 996.0 C2682.0 1000.0 2668.0 994.0 2666.0 985.0 Z" fill="#404040"/><ellipse cx="2666.0" cy="1060.0" rx="16.5" ry="15" transform="rotate(0 2666.0 1060.0)" fill="#e9b12b" stroke="#6c6f76" stroke-width="1.2" /><path d="M2650.0 1061.0 C2654.0 1054.0 2672.0 1056.0 2676.0 1072.0 C2666.0 1076.0 2652.0 1070.0 2650.0 1061.0 Z" fill="#404040"/><ellipse cx="2731.0" cy="1105.0" rx="16.5" ry="15" transform="rotate(0 2731.0 1105.0)" fill="#e9b12b" stroke="#6c6f76" stroke-width="1.2" /><path d="M2715.0 1106.0 C2719.0 1099.0 2737.0 1101.0 2741.0 1117.0 C2731.0 1121.0 2717.0 1115.0 2715.0 1106.0 Z" fill="#404040"/><ellipse cx="2795.0" cy="1151.0" rx="16.5" ry="15" transform="rotate(0 2795.0 1151.0)" fill="#e9b12b" stroke="#6c6f76" stroke-width="1.2" /><path d="M2779.0 1152.0 C2783.0 1145.0 2801.0 1147.0 2805.0 1163.0 C2795.0 1167.0 2781.0 1161.0 2779.0 1152.0 Z" fill="#404040"/><ellipse cx="2747.0" cy="1173.0" rx="16.5" ry="15" transform="rotate(0 2747.0 1173.0)" fill="#e9b12b" stroke="#6c6f76" stroke-width="1.2" /><path d="M2731.0 1174.0 C2735.0 1167.0 2753.0 1169.0 2757.0 1185.0 C2747.0 1189.0 2733.0 1183.0 2731.0 1174.0 Z" fill="#404040"/><ellipse cx="2780.0" cy="1225.0" rx="16.5" ry="15" transform="rotate(0 2780.0 1225.0)" fill="#e9b12b" stroke="#6c6f76" stroke-width="1.2" /><path d="M2764.0 1226.0 C2768.0 1219.0 2786.0 1221.0 2790.0 1237.0 C2780.0 1241.0 2766.0 1235.0 2764.0 1226.0 Z" fill="#404040"/><ellipse cx="2712.0" cy="1030.0" rx="16.5" ry="15" transform="rotate(0 2712.0 1030.0)" fill="#e9b12b" stroke="#6c6f76" stroke-width="1.2" /><path d="M2696.0 1031.0 C2700.0 1024.0 2718.0 1026.0 2722.0 1042.0 C2712.0 1046.0 2698.0 1040.0 2696.0 1031.0 Z" fill="#404040"/><ellipse cx="2742.0" cy="1005.0" rx="16.5" ry="15" transform="rotate(0 2742.0 1005.0)" fill="#e9b12b" stroke="#6c6f76" stroke-width="1.2" /><path d="M2726.0 1006.0 C2730.0 999.0 2748.0 1001.0 2752.0 1017.0 C2742.0 1021.0 2728.0 1015.0 2726.0 1006.0 Z" fill="#404040"/><polygon points="2882.0,702.0 2925.0,770.0 3060.0,966.0 3040.0,978.0 2903.0,782.0 2847.0,753.0" fill="#fbc631" stroke="#6c6f76" stroke-width="1.2"/><polygon points="2845.0,757.0 2903.0,782.0 2885.0,838.0 2832.0,806.0" fill="#f3bd2f" stroke="#6c6f76" stroke-width="1.2"/><ellipse cx="2866.0" cy="795.0" rx="12" ry="21" transform="rotate(-12 2866.0 795.0)" fill="#e9b12b" stroke="#6c6f76" stroke-width="1.2" /><ellipse cx="3112.0" cy="786.0" rx="122" ry="92" transform="rotate(-40 3112.0 786.0)" fill="#e2aa2a" stroke="#6c6f76" stroke-width="1.5" /><ellipse cx="3140.0" cy="760.0" rx="122" ry="92" transform="rotate(-40 3140.0 760.0)" fill="#fdc832" stroke="#6c6f76" stroke-width="1.5" /><ellipse cx="3126.0" cy="662.0" rx="33" ry="30" transform="rotate(-20 3126.0 662.0)" fill="#fdc832" stroke="#6c6f76" stroke-width="1.3" /><ellipse cx="3045.0" cy="735.0" rx="33" ry="30" transform="rotate(-20 3045.0 735.0)" fill="#fdc832" stroke="#6c6f76" stroke-width="1.3" /><ellipse cx="3151.0" cy="832.0" rx="33" ry="30" transform="rotate(-20 3151.0 832.0)" fill="#fdc832" stroke="#6c6f76" stroke-width="1.3" /><ellipse cx="3234.0" cy="760.0" rx="33" ry="30" transform="rotate(-20 3234.0 760.0)" fill="#fdc832" stroke="#6c6f76" stroke-width="1.3" /><ellipse cx="3140.0" cy="760.0" rx="100" ry="76" transform="rotate(-40 3140.0 760.0)" fill="#fdc832" stroke="#6c6f76" stroke-width="0" /><ellipse cx="3142.0" cy="745.0" rx="66" ry="52" transform="rotate(-30 3142.0 745.0)" fill="#efb62c" stroke="#6c6f76" stroke-width="1.2" /><ellipse cx="3146.0" cy="740.0" rx="52" ry="40" transform="rotate(-30 3146.0 740.0)" fill="#fdc832" stroke="#6c6f76" stroke-width="1.2" /><ellipse cx="3126.0" cy="662.0" rx="16" ry="14" transform="rotate(-20 3126.0 662.0)" fill="#e9b12b" stroke="#6c6f76" stroke-width="1.2" /><ellipse cx="3045.0" cy="735.0" rx="16" ry="14" transform="rotate(-20 3045.0 735.0)" fill="#e9b12b" stroke="#6c6f76" stroke-width="1.2" /><ellipse cx="3151.0" cy="832.0" rx="16" ry="14" transform="rotate(-20 3151.0 832.0)" fill="#e9b12b" stroke="#6c6f76" stroke-width="1.2" /><ellipse cx="3234.0" cy="760.0" rx="16" ry="14" transform="rotate(-20 3234.0 760.0)" fill="#e9b12b" stroke="#6c6f76" stroke-width="1.2" /><polygon points="3116.0,720.0 3140.0,690.0 3188.0,686.0 3200.0,718.0 3176.0,756.0 3128.0,760.0" fill="#f6c131" stroke="#6c6f76" stroke-width="1.3"/><path d="M3140 718 L3188 718 L3176 756 M3140 718 L3128 760" fill="none" stroke="#6c6f76" stroke-width="1.2"/><polygon points="3140.0,718.0 3188.0,718.0 3176.0,756.0 3128.0,760.0" fill="#e9b22c" stroke="#6c6f76" stroke-width="1.2"/><ellipse cx="3166.0" cy="704.0" rx="18" ry="14" transform="rotate(-20 3166.0 704.0)" fill="#fdc832" stroke="#6c6f76" stroke-width="1.3" /><ellipse cx="3166.0" cy="704.0" rx="10" ry="8" transform="rotate(-20 3166.0 704.0)" fill="#9a9070" stroke="#6c6f76" stroke-width="1.0" /><ellipse cx="2981.0" cy="703.0" rx="16" ry="15" transform="rotate(0 2981.0 703.0)" fill="#e9b12b" stroke="#6c6f76" stroke-width="1.2" /><ellipse cx="2928.0" cy="724.0" rx="16" ry="15" transform="rotate(0 2928.0 724.0)" fill="#e9b12b" stroke="#6c6f76" stroke-width="1.2" /><ellipse cx="2966.0" cy="781.0" rx="16" ry="15" transform="rotate(0 2966.0 781.0)" fill="#e9b12b" stroke="#6c6f76" stroke-width="1.2" /><ellipse cx="3045.5" cy="889.0" rx="16" ry="15" transform="rotate(0 3045.5 889.0)" fill="#e9b12b" stroke="#6c6f76" stroke-width="1.2" /><ellipse cx="3137.0" cy="924.0" rx="16" ry="15" transform="rotate(0 3137.0 924.0)" fill="#e9b12b" stroke="#6c6f76" stroke-width="1.2" /><ellipse cx="3083.0" cy="943.0" rx="16" ry="15" transform="rotate(0 3083.0 943.0)" fill="#e9b12b" stroke="#6c6f76" stroke-width="1.2" /><ellipse cx="3244.0" cy="878.0" rx="16" ry="15" transform="rotate(0 3244.0 878.0)" fill="#e9b12b" stroke="#6c6f76" stroke-width="1.2" /><ellipse cx="3297.0" cy="856.0" rx="16" ry="15" transform="rotate(0 3297.0 856.0)" fill="#e9b12b" stroke="#6c6f76" stroke-width="1.2" /><ellipse cx="3140.0" cy="627.0" rx="16" ry="15" transform="rotate(0 3140.0 627.0)" fill="#e9b12b" stroke="#6c6f76" stroke-width="1.2" /><ellipse cx="3262.0" cy="800.0" rx="9" ry="12" transform="rotate(-30 3262.0 800.0)" fill="#fdc832" stroke="#6c6f76" stroke-width="1.2" /><polygon points="2720.0,1022.0 2736.0,957.0 2914.0,852.0 3000.0,880.0 3025.0,917.0 2897.0,1005.0 2770.0,1090.0" fill="#f4be30" stroke="#6c6f76" stroke-width="1.3"/><path d="M2736 957 L2770 1090" stroke="#6c6f76" stroke-width="1.1"/><path d="M2749 950 L2788 1078" stroke="#6c6f76" stroke-width="1.1"/><path d="M2761 942 L2806 1065" stroke="#6c6f76" stroke-width="1.1"/><path d="M2774 934 L2825 1053" stroke="#6c6f76" stroke-width="1.1"/><path d="M2787 927 L2843 1041" stroke="#6c6f76" stroke-width="1.1"/><path d="M2800 920 L2861 1028" stroke="#6c6f76" stroke-width="1.1"/><path d="M2812 912 L2879 1016" stroke="#6c6f76" stroke-width="1.1"/><path d="M2825 904 L2898 1004" stroke="#6c6f76" stroke-width="1.1"/><path d="M2838 897 L2916 991" stroke="#6c6f76" stroke-width="1.1"/><path d="M2850 890 L2934 979" stroke="#6c6f76" stroke-width="1.1"/><path d="M2863 882 L2952 966" stroke="#6c6f76" stroke-width="1.1"/><path d="M2876 874 L2970 954" stroke="#6c6f76" stroke-width="1.1"/><path d="M2889 867 L2989 942" stroke="#6c6f76" stroke-width="1.1"/><path d="M2901 860 L3007 929" stroke="#6c6f76" stroke-width="1.1"/><path d="M2914 852 L3025 917" stroke="#6c6f76" stroke-width="1.1"/><path d="M2744 990 L2942 868" stroke="#6c6f76" stroke-width="1"/><path d="M2753 1024 L2970 884" stroke="#6c6f76" stroke-width="1"/><path d="M2762 1057 L2997 901" stroke="#6c6f76" stroke-width="1"/><polygon points="2728.0,945.0 2912.0,840.0 2922.0,852.0 2740.0,958.0" fill="#fed63e" stroke="#6c6f76" stroke-width="1.2"/><ellipse cx="2776.0" cy="831.0" rx="52" ry="34" transform="rotate(-35 2776.0 831.0)" fill="#f6c233" stroke="#6c6f76" stroke-width="1.5" /><ellipse cx="2776.0" cy="833.0" rx="40" ry="25" transform="rotate(-35 2776.0 833.0)" fill="none" stroke="#8a8578" stroke-width="3.0" /><ellipse cx="2778.0" cy="835.0" rx="32" ry="19" transform="rotate(-35 2778.0 835.0)" fill="none" stroke="#8a8578" stroke-width="2.0" /><polygon points="2757.0,847.0 2803.0,822.0 2841.0,868.0 2794.0,901.0" fill="#fdc832" stroke="#6c6f76" stroke-width="1.3"/><path d="M2780 834 L2818 884" stroke="#6c6f76" stroke-width="1.2"/><path d="M2777 1083 C2790 1120 2850 1128 2862 1095 C2850 1085 2810 1080 2777 1083 Z" fill="#404040"/><ellipse cx="2897.0" cy="1005.0" rx="152" ry="50" transform="rotate(-32 2897.0 1005.0)" fill="#d9a228" stroke="#6c6f76" stroke-width="1.5" /><ellipse cx="2821.0" cy="1062.0" rx="26" ry="13" transform="rotate(-32 2821.0 1062.0)" fill="url(#hole)" stroke="#6c6f76" stroke-width="1.2" /><ellipse cx="2979.0" cy="941.0" rx="26" ry="13" transform="rotate(-32 2979.0 941.0)" fill="url(#hole)" stroke="#6c6f76" stroke-width="1.2" /><ellipse cx="2870.0" cy="988.0" rx="26" ry="13" transform="rotate(-32 2870.0 988.0)" fill="url(#hole)" stroke="#6c6f76" stroke-width="1.2" /><ellipse cx="2823.0" cy="1034.0" rx="12" ry="7" transform="rotate(-32 2823.0 1034.0)" fill="#d9a228" stroke="#6c6f76" stroke-width="2.0" /><ellipse cx="2864.0" cy="1054.0" rx="12" ry="7" transform="rotate(-32 2864.0 1054.0)" fill="#d9a228" stroke="#6c6f76" stroke-width="2.0" /><ellipse cx="2932.0" cy="949.0" rx="12" ry="7" transform="rotate(-32 2932.0 949.0)" fill="#d9a228" stroke="#6c6f76" stroke-width="2.0" /><ellipse cx="2975.0" cy="970.0" rx="12" ry="7" transform="rotate(-32 2975.0 970.0)" fill="#d9a228" stroke="#6c6f76" stroke-width="2.0" /><polygon points="2870.0,988.0 2902.0,978.0 2965.0,1042.0 2938.0,1056.0" fill="#fdc832" stroke="#6c6f76" stroke-width="1.3"/><path d="M2886 983 L2951 1049" stroke="#6c6f76" stroke-width="1.2"/><polygon points="2896.0,1077.0 3378.0,880.0 3386.0,891.0 2905.0,1092.0 2760.0,1313.0 2754.0,1286.0" fill="#f7c232" stroke="#6c6f76" stroke-width="1.2"/><polygon points="2905.0,1092.0 3386.0,891.0 3242.0,1114.0 2760.0,1313.0" fill="#d4a027" stroke="#6c6f76" stroke-width="1.5"/><polygon points="3144.0,958.0 3242.0,918.0 3240.0,928.0 3150.0,966.0" fill="#3c3c3c" stroke="#6c6f76" stroke-width="0"/><ellipse cx="3255.3" cy="972.2" rx="15" ry="5.8" transform="rotate(-28 3255.3 972.2)" fill="url(#hole)" stroke="#6c6f76" stroke-width="1.1" /><ellipse cx="3283.6" cy="987.7" rx="15" ry="5.8" transform="rotate(-28 3283.6 987.7)" fill="url(#hole)" stroke="#6c6f76" stroke-width="1.1" /><ellipse cx="3149.2" cy="1017.5" rx="15" ry="5.8" transform="rotate(-28 3149.2 1017.5)" fill="url(#hole)" stroke="#6c6f76" stroke-width="1.1" /><ellipse cx="3232.7" cy="1011.8" rx="15" ry="5.8" transform="rotate(-28 3232.7 1011.8)" fill="url(#hole)" stroke="#6c6f76" stroke-width="1.1" /><ellipse cx="3232.7" cy="1035.9" rx="15" ry="5.8" transform="rotate(-28 3232.7 1035.9)" fill="url(#hole)" stroke="#6c6f76" stroke-width="1.1" /><ellipse cx="3232.7" cy="1062.7" rx="15" ry="5.8" transform="rotate(-28 3232.7 1062.7)" fill="url(#hole)" stroke="#6c6f76" stroke-width="1.1" /><ellipse cx="3181.7" cy="1084.0" rx="15" ry="5.8" transform="rotate(-28 3181.7 1084.0)" fill="url(#hole)" stroke="#6c6f76" stroke-width="1.1" /><ellipse cx="3210.0" cy="1098.1" rx="15" ry="5.8" transform="rotate(-28 3210.0 1098.1)" fill="url(#hole)" stroke="#6c6f76" stroke-width="1.1" /><ellipse cx="3071.3" cy="1074.1" rx="15" ry="5.8" transform="rotate(-28 3071.3 1074.1)" fill="url(#hole)" stroke="#6c6f76" stroke-width="1.1" /><ellipse cx="2989.3" cy="1085.4" rx="15" ry="5.8" transform="rotate(-28 2989.3 1085.4)" fill="url(#hole)" stroke="#6c6f76" stroke-width="1.1" /><ellipse cx="2935.5" cy="1108.0" rx="15" ry="5.8" transform="rotate(-28 2935.5 1108.0)" fill="url(#hole)" stroke="#6c6f76" stroke-width="1.1" /><ellipse cx="2963.8" cy="1122.2" rx="15" ry="5.8" transform="rotate(-28 2963.8 1122.2)" fill="url(#hole)" stroke="#6c6f76" stroke-width="1.1" /><ellipse cx="3072.8" cy="1103.8" rx="15" ry="5.8" transform="rotate(-28 3072.8 1103.8)" fill="url(#hole)" stroke="#6c6f76" stroke-width="1.1" /><ellipse cx="3072.8" cy="1132.1" rx="15" ry="5.8" transform="rotate(-28 3072.8 1132.1)" fill="url(#hole)" stroke="#6c6f76" stroke-width="1.1" /><ellipse cx="3156.3" cy="1120.8" rx="15" ry="5.8" transform="rotate(-28 3156.3 1120.8)" fill="url(#hole)" stroke="#6c6f76" stroke-width="1.1" /><ellipse cx="2912.8" cy="1143.4" rx="15" ry="5.8" transform="rotate(-28 2912.8 1143.4)" fill="url(#hole)" stroke="#6c6f76" stroke-width="1.1" /><ellipse cx="2912.8" cy="1168.9" rx="15" ry="5.8" transform="rotate(-28 2912.8 1168.9)" fill="url(#hole)" stroke="#6c6f76" stroke-width="1.1" /><ellipse cx="2912.8" cy="1198.6" rx="15" ry="5.8" transform="rotate(-28 2912.8 1198.6)" fill="url(#hole)" stroke="#6c6f76" stroke-width="1.1" /><ellipse cx="3050.1" cy="1166.1" rx="15" ry="5.8" transform="rotate(-28 3050.1 1166.1)" fill="url(#hole)" stroke="#6c6f76" stroke-width="1.1" /><ellipse cx="2861.9" cy="1219.8" rx="15" ry="5.8" transform="rotate(-28 2861.9 1219.8)" fill="url(#hole)" stroke="#6c6f76" stroke-width="1.1" /><ellipse cx="2890.2" cy="1234.0" rx="15" ry="5.8" transform="rotate(-28 2890.2 1234.0)" fill="url(#hole)" stroke="#6c6f76" stroke-width="1.1" /><ellipse cx="2836.4" cy="1255.2" rx="15" ry="5.8" transform="rotate(-28 2836.4 1255.2)" fill="url(#hole)" stroke="#6c6f76" stroke-width="1.1" /><ellipse cx="3195.9" cy="1004.7" rx="21" ry="6.5" transform="rotate(-52 3195.9 1004.7)" fill="url(#hole)" stroke="#6c6f76" stroke-width="1.1" /><ellipse cx="3036.0" cy="1072.7" rx="21" ry="6.5" transform="rotate(-52 3036.0 1072.7)" fill="url(#hole)" stroke="#6c6f76" stroke-width="1.1" /><ellipse cx="3111.0" cy="1129.3" rx="21" ry="6.5" transform="rotate(-52 3111.0 1129.3)" fill="url(#hole)" stroke="#6c6f76" stroke-width="1.1" /><ellipse cx="2946.8" cy="1202.9" rx="21" ry="6.5" transform="rotate(-52 2946.8 1202.9)" fill="url(#hole)" stroke="#6c6f76" stroke-width="1.1" /><ellipse cx="3153.0" cy="1069.0" rx="50" ry="27" transform="rotate(-30 3153.0 1069.0)" fill="url(#hole)" stroke="#6c6f76" stroke-width="1.4" /><ellipse cx="3140.0" cy="1076.0" rx="30" ry="14" transform="rotate(-30 3140.0 1076.0)" fill="none" stroke="#6c6f76" stroke-width="1.2" /><ellipse cx="3102.0" cy="1042.0" rx="27" ry="18" transform="rotate(-30 3102.0 1042.0)" fill="url(#hole)" stroke="#6c6f76" stroke-width="1.3" /><circle cx="3114" cy="1050" r="6" fill="none" stroke="#6c6f76" stroke-width="1.5"/><ellipse cx="3312.0" cy="950.0" rx="27" ry="18" transform="rotate(-30 3312.0 950.0)" fill="url(#hole)" stroke="#6c6f76" stroke-width="1.3" /><circle cx="3324" cy="958" r="6" fill="none" stroke="#6c6f76" stroke-width="1.5"/><ellipse cx="3002.0" cy="1160.0" rx="52" ry="30" transform="rotate(-30 3002.0 1160.0)" fill="#f0bb30" stroke="#6c6f76" stroke-width="1.5" /><ellipse cx="3002.0" cy="1160.0" rx="44" ry="24" transform="rotate(-30 3002.0 1160.0)" fill="none" stroke="#6c6f76" stroke-width="1.3" /><ellipse cx="3004.0" cy="1162.0" rx="36" ry="19" transform="rotate(-30 3004.0 1162.0)" fill="none" stroke="#6c6f76" stroke-width="1.3" /><polygon points="2982.0,1148.0 3005.0,1128.0 3035.0,1136.0 3030.0,1172.0 3002.0,1186.0 2976.0,1172.0" fill="#fbc935" stroke="#6c6f76" stroke-width="1.3"/><ellipse cx="3012.0" cy="1163.0" rx="11" ry="8" transform="rotate(-30 3012.0 1163.0)" fill="#a89870" stroke="#6c6f76" stroke-width="1" /></g></svg>
<div class="r" style="left:804px;top:1618px;width:2780px;height:2px;background:#2b2b2b;"></div>
<div class="r" style="left:804px;top:1620px;width:2780px;height:506px;background:#181818;"></div>
<div class="a" style="left:845px;top:1655.3px;font-family:'Liberation Sans';font-size:22px;color:#e7e7e7;font-weight:400;letter-spacing:0px;">TERMINAL</div>
<div class="a" style="left:1004px;top:1655.3px;font-family:'Liberation Sans';font-size:22px;color:#9d9d9d;font-weight:400;letter-spacing:0px;">PORTS</div>
<div class="a" style="left:1125px;top:1655.3px;font-family:'Liberation Sans';font-size:22px;color:#9d9d9d;font-weight:400;letter-spacing:0px;">PROBLEMS</div>
<div class="a" style="left:1293px;top:1655.3px;font-family:'Liberation Sans';font-size:22px;color:#9d9d9d;font-weight:400;letter-spacing:0px;">OUTPUT</div>
<div class="a" style="left:1434px;top:1655.3px;font-family:'Liberation Sans';font-size:22px;color:#9d9d9d;font-weight:400;letter-spacing:0px;">DEBUG CONSOLE</div>
<div class="a" style="left:1671px;top:1655.3px;font-family:'Liberation Sans';font-size:22px;color:#9d9d9d;font-weight:400;letter-spacing:0px;">SERIAL MONITOR</div>
<div class="a" style="left:1905px;top:1655.3px;font-family:'Liberation Sans';font-size:22px;color:#9d9d9d;font-weight:400;letter-spacing:0px;">COMMENTS</div>
<div class="r" style="left:840px;top:1676px;width:119px;height:2px;background:#0078d4;"></div>
<svg style="left:3341px;top:1640px;" width="28" height="28" viewBox="0 0 28 28"><path d="M14 2 V26 M2 14 H26" stroke="#cccccc" stroke-width="2.4"/></svg>
<svg style="left:3380px;top:1650px;" width="16" height="10" viewBox="0 0 16 10"><path d="M1 1 L8 8 L15 1" fill="none" stroke="#cccccc" stroke-width="2"/></svg>
<svg style="left:3419px;top:1650px;" width="34" height="8" viewBox="0 0 34 8"><g fill="#cccccc"><circle cx="6" cy="3.5" r="2.3"/><circle cx="16" cy="3.5" r="2.3"/><circle cx="26" cy="3.5" r="2.3"/></g></svg>
<svg style="left:3474px;top:1645px;" width="26" height="16" viewBox="0 0 26 16"><path d="M2 14 L13 3 L24 14" fill="none" stroke="#cccccc" stroke-width="2.4"/></svg>
<svg style="left:3527px;top:1643px;" width="22" height="22" viewBox="0 0 22 22"><path d="M2 2 L20 20 M20 2 L2 20" stroke="#cccccc" stroke-width="2.4"/></svg>
<div class="a" style="left:844.5px;top:1747.9px;font-family:'Liberation Mono';font-size:25.5px;color:#cccccc;font-weight:400;letter-spacing:-1.3px;">595abf83b/structure/mount_quad_block.step', '/Users/clairbee/.partcad/git/e9dcf6aff655e52467d36c284ceea90b1d39d7121b92341e9ea3529595abf83b']</div>
<div class="a" style="left:844.5px;top:1777.9px;font-family:'Liberation Mono';font-size:25.5px;color:#cccccc;font-weight:400;letter-spacing:-1.3px;"><span style="color:#3b8eea">DEBUG:</span> Running: ['/Users/clairbee/miniconda3/bin/conda', 'run', '--no-capture-output', '-p', '/Users/clairbee/.partcad/runtime/partcad-python-conda-3.10', 'python', '/Use</div>
<div class="a" style="left:844.5px;top:1807.9px;font-family:'Liberation Mono';font-size:25.5px;color:#cccccc;font-weight:400;letter-spacing:-1.3px;">rs/clairbee/projects/robotics/partcad/partcad/src/partcad/wrappers/wrapper_step.py', '/Users/clairbee/.partcad/git/e9dcf6aff655e52467d36c284ceea90b1d39d7121b92341e9ea3529</div>
<div class="a" style="left:844.5px;top:1837.9px;font-family:'Liberation Mono';font-size:25.5px;color:#cccccc;font-weight:400;letter-spacing:-1.3px;">595abf83b/structure/u_channel_2.step', '/Users/clairbee/.partcad/git/e9dcf6aff655e52467d36c284ceea90b1d39d7121b92341e9ea3529595abf83b']</div>
<div class="a" style="left:844.5px;top:1867.9px;font-family:'Liberation Mono';font-size:25.5px;color:#cccccc;font-weight:400;letter-spacing:-1.3px;"><span style="color:#23d18b">INFO:</span>  Visualizing in "OCP CAD Viewer"...</div>
<div class="a" style="left:844.5px;top:1897.9px;font-family:'Liberation Mono';font-size:25.5px;color:#cccccc;font-weight:400;letter-spacing:-1.3px;"><span style="color:#23d18b">INFO:</span>  DONE: Inspect: /pub/robotics/parts/gobilda: examples/wormgear: 37.83s</div>
<div class="r" style="left:844px;top:1910px;width:14px;height:29px;border:2px solid #cccccc"></div>
<div class="r" style="left:3344px;top:1688px;width:2px;height:438px;background:#2b2b2b;"></div>
<div class="r" style="left:3346px;top:1732px;width:238px;height:44px;background:#37373d;"></div>
<div class="r" style="left:3344px;top:1732px;width:3px;height:44px;background:#0078d4;"></div>
<svg style="left:3367px;top:1697px;" width="28" height="28" viewBox="0 0 28 28"><g fill="none" stroke="#cccccc" stroke-width="2"><rect x="1" y="1" width="26" height="26" rx="1"/><path d="M6 8 L12 13 L6 18 M13 20 H21"/></g></svg>
<div class="a" style="left:3406px;top:1710.9px;font-family:'Liberation Sans';font-size:26px;color:#cccccc;font-weight:400;letter-spacing:0px;">zsh</div>
<svg style="left:3367px;top:1741px;" width="28" height="28" viewBox="0 0 28 28"><g fill="none" stroke="#cccccc" stroke-width="2"><rect x="1" y="1" width="26" height="26" rx="1"/><path d="M6 8 L12 13 L6 18 M13 20 H21"/></g></svg>
<div class="a" style="left:3406px;top:1754.9px;font-family:'Liberation Sans';font-size:26px;color:#cccccc;font-weight:400;letter-spacing:0px;">PartCAD</div>
</body></html>
